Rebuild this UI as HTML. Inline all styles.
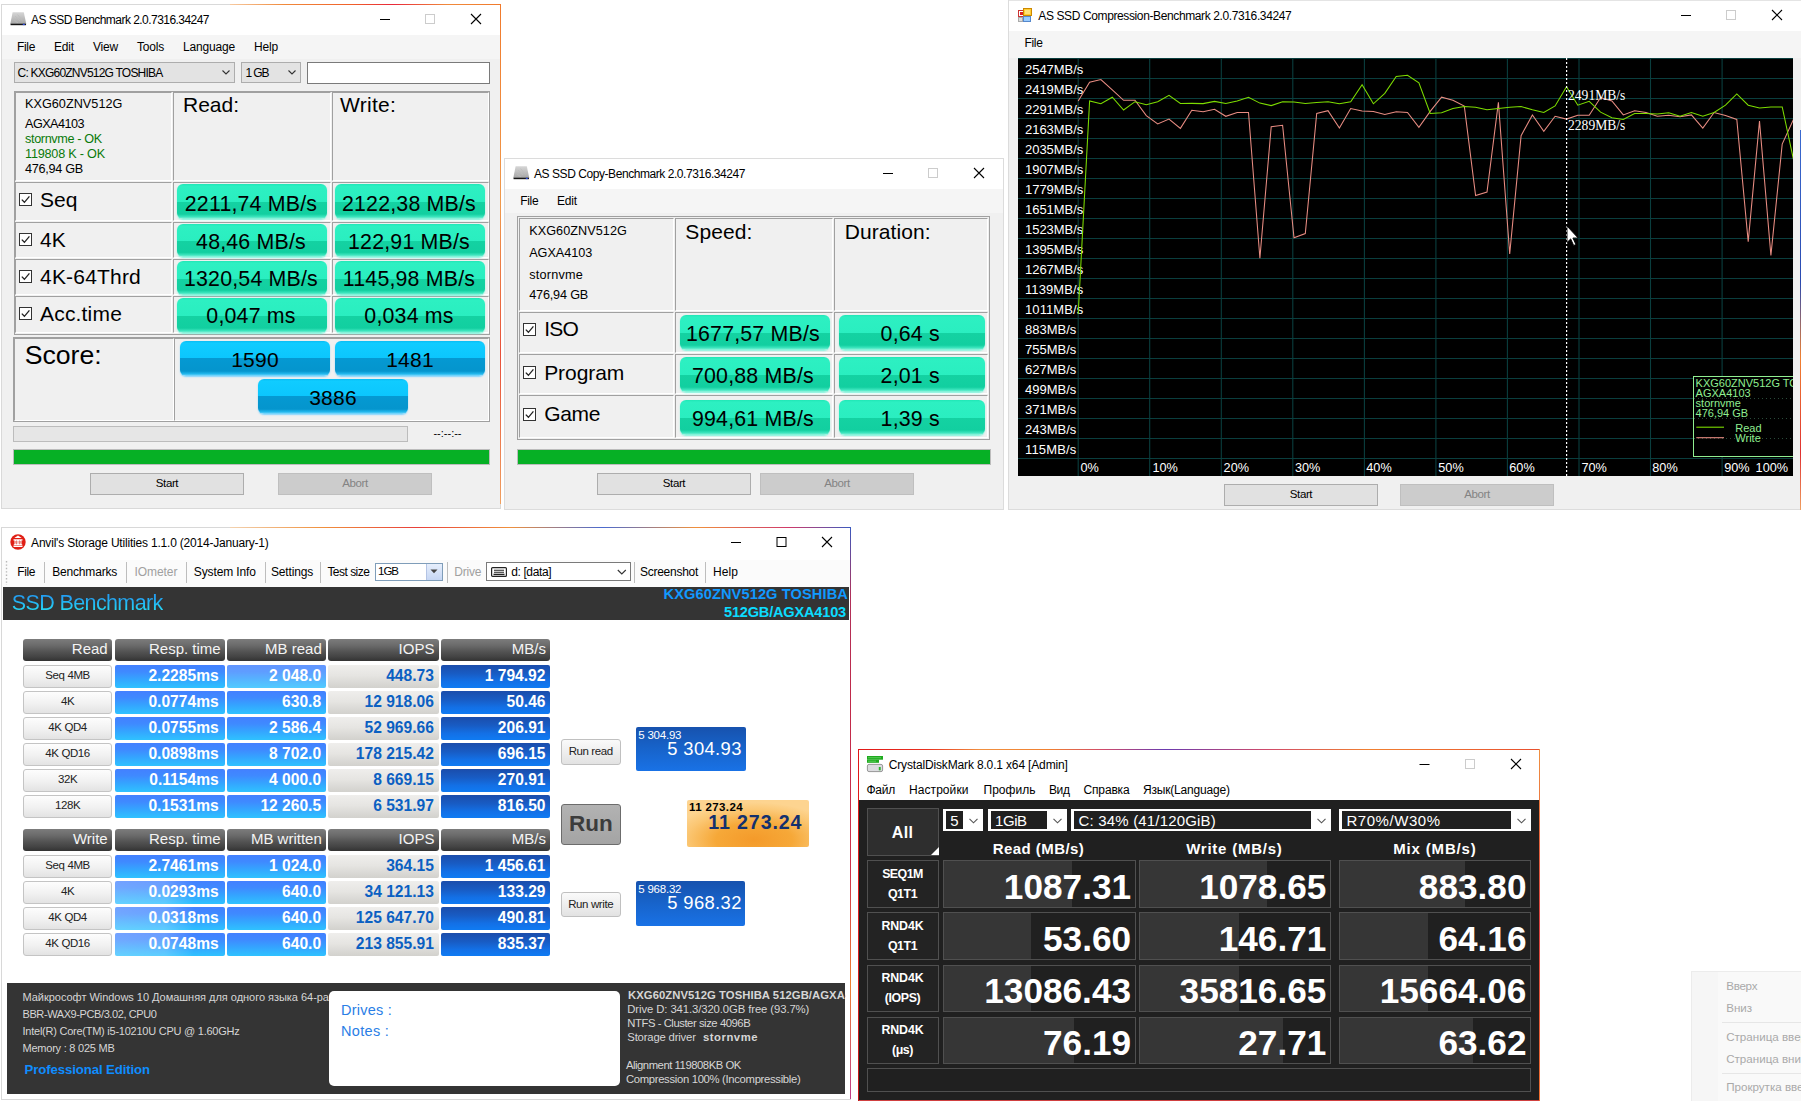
<!DOCTYPE html>
<html><head><meta charset="utf-8"><title>SSD benchmarks</title>
<style>
html,body{margin:0;padding:0;background:#fff;}
body{width:1801px;height:1101px;overflow:hidden;position:relative;font-family:"Liberation Sans",sans-serif;}
.a{position:absolute;display:block;}
.t{position:absolute;white-space:pre;display:block;}
</style></head><body>
<div class="a" style="left:1px;top:4px;width:500px;height:505px;background:#f0f0f0;box-sizing:border-box;border:1px solid #d9d9d9;"></div>
<div class="a" style="left:230px;top:4px;width:271px;height:1px;background:linear-gradient(to right,#f6c9a0,#f08a3c 20%,#f0602a 45%,#e8283a 60%,#f08a3c 80%,#f07a2c);"></div>
<div class="a" style="left:500px;top:4px;width:1px;height:500px;background:linear-gradient(to bottom,#f07a2c,#f09a4c 40%,#e8503a 70%,#f0a060);"></div>
<div class="a" style="left:2px;top:5px;width:498px;height:30px;background:#fff;"></div>
<svg class="a" style="left:9.8px;top:11.8px" width="17" height="14" viewBox="0 0 17 14"><defs><linearGradient id="ig9" x1="0" y1="0" x2="0" y2="1"><stop offset="0" stop-color="#d6d6d6"/><stop offset="1" stop-color="#a4a4a4"/></linearGradient></defs><path d="M2.6 0.3h11.2l2.4 11.2v1H0.4v-1z" fill="url(#ig9)"/><path d="M5 4l5 5M7.5 2.5l5 6M4 8l4 3" stroke="#bcbcbc" stroke-width=".8" fill="none"/><path d="M0.6 11.7h15.4v1.5H0.6z" fill="#161616"/><rect x="12.8" y="11.8" width="2" height="1.3" fill="#2a4ae0"/></svg>
<span class="t" style='left:31.00px;top:13.84px;font:400 12px/1 "Liberation Sans", sans-serif;color:#000;letter-spacing:-0.542px;'>AS SSD Benchmark 2.0.7316.34247</span>
<svg class="a" style="left:0;top:0" width="1801" height="1101" viewBox="0 0 1801 1101" fill="none"><path d="M380 19.5h10" stroke="#000" stroke-width="1"/><rect x="425.5" y="14.5" width="9" height="9" stroke="#ccc" stroke-width="1"/><path d="M471 14l10 10M481 14l-10 10" stroke="#000" stroke-width="1.1"/></svg>
<div class="a" style="left:2px;top:35px;width:498px;height:24px;background:#f5f5f5;"></div>
<span class="t" style='left:17.00px;top:40.84px;font:400 12px/1 "Liberation Sans", sans-serif;color:#000;letter-spacing:-0.334px;'>File</span>
<span class="t" style='left:54.00px;top:40.84px;font:400 12px/1 "Liberation Sans", sans-serif;color:#000;letter-spacing:-0.169px;'>Edit</span>
<span class="t" style='left:93.00px;top:40.84px;font:400 12px/1 "Liberation Sans", sans-serif;color:#000;letter-spacing:-0.198px;'>View</span>
<span class="t" style='left:137.00px;top:40.84px;font:400 12px/1 "Liberation Sans", sans-serif;color:#000;letter-spacing:-0.203px;'>Tools</span>
<span class="t" style='left:183.00px;top:40.84px;font:400 12px/1 "Liberation Sans", sans-serif;color:#000;letter-spacing:-0.174px;'>Language</span>
<span class="t" style='left:254.00px;top:40.84px;font:400 12px/1 "Liberation Sans", sans-serif;color:#000;letter-spacing:-0.170px;'>Help</span>
<div class="a" style="left:14px;top:62px;width:221px;height:21px;background:#e3e3e3;border:1px solid #adadad;box-sizing:border-box;"></div>
<span class="t" style='left:17.50px;top:66.84px;font:400 12px/1 "Liberation Sans", sans-serif;color:#000;letter-spacing:-0.781px;'>C: KXG60ZNV512G TOSHIBA</span>
<div class="a" style="left:241px;top:62px;width:60px;height:21px;background:#e3e3e3;border:1px solid #adadad;box-sizing:border-box;"></div>
<span class="t" style='left:245.50px;top:66.84px;font:400 12px/1 "Liberation Sans", sans-serif;color:#000;letter-spacing:-1.086px;'>1 GB</span>
<svg class="a" style="left:0;top:0" width="520" height="100" fill="none" stroke="#333" stroke-width="1.1"><path d="M222.5 70.5l3.5 3.5l3.5-3.5M288.5 70.5l3.5 3.5l3.5-3.5"/></svg>
<div class="a" style="left:307px;top:62px;width:183px;height:22px;background:#fff;border:1px solid #7a7a7a;box-sizing:border-box;"></div>
<div class="a" style="left:14px;top:91px;width:476px;height:244px;box-sizing:border-box;border:1px solid #a0a0a0;"></div>
<div class="a" style="left:15px;top:92px;width:157px;height:89px;box-sizing:border-box;border:1px solid #a0a0a0;border-right-color:#fff;border-bottom-color:#fff;background:#f0f0f0;"></div>
<div class="a" style="left:173px;top:92px;width:158px;height:89px;box-sizing:border-box;border:1px solid #a0a0a0;border-right-color:#fff;border-bottom-color:#fff;background:#f0f0f0;"></div>
<div class="a" style="left:332px;top:92px;width:157px;height:89px;box-sizing:border-box;border:1px solid #a0a0a0;border-right-color:#fff;border-bottom-color:#fff;background:#f0f0f0;"></div>
<div class="a" style="left:15px;top:182px;width:157px;height:39px;box-sizing:border-box;border:1px solid #a0a0a0;border-right-color:#fff;border-bottom-color:#fff;background:#f0f0f0;"></div>
<div class="a" style="left:173px;top:182px;width:158px;height:39px;box-sizing:border-box;border:1px solid #a0a0a0;border-right-color:#fff;border-bottom-color:#fff;background:#f0f0f0;"></div>
<div class="a" style="left:332px;top:182px;width:157px;height:39px;box-sizing:border-box;border:1px solid #a0a0a0;border-right-color:#fff;border-bottom-color:#fff;background:#f0f0f0;"></div>
<div class="a" style="left:15px;top:222px;width:157px;height:36px;box-sizing:border-box;border:1px solid #a0a0a0;border-right-color:#fff;border-bottom-color:#fff;background:#f0f0f0;"></div>
<div class="a" style="left:173px;top:222px;width:158px;height:36px;box-sizing:border-box;border:1px solid #a0a0a0;border-right-color:#fff;border-bottom-color:#fff;background:#f0f0f0;"></div>
<div class="a" style="left:332px;top:222px;width:157px;height:36px;box-sizing:border-box;border:1px solid #a0a0a0;border-right-color:#fff;border-bottom-color:#fff;background:#f0f0f0;"></div>
<div class="a" style="left:15px;top:259px;width:157px;height:36px;box-sizing:border-box;border:1px solid #a0a0a0;border-right-color:#fff;border-bottom-color:#fff;background:#f0f0f0;"></div>
<div class="a" style="left:173px;top:259px;width:158px;height:36px;box-sizing:border-box;border:1px solid #a0a0a0;border-right-color:#fff;border-bottom-color:#fff;background:#f0f0f0;"></div>
<div class="a" style="left:332px;top:259px;width:157px;height:36px;box-sizing:border-box;border:1px solid #a0a0a0;border-right-color:#fff;border-bottom-color:#fff;background:#f0f0f0;"></div>
<div class="a" style="left:15px;top:296px;width:157px;height:37px;box-sizing:border-box;border:1px solid #a0a0a0;border-right-color:#fff;border-bottom-color:#fff;background:#f0f0f0;"></div>
<div class="a" style="left:173px;top:296px;width:158px;height:37px;box-sizing:border-box;border:1px solid #a0a0a0;border-right-color:#fff;border-bottom-color:#fff;background:#f0f0f0;"></div>
<div class="a" style="left:332px;top:296px;width:157px;height:37px;box-sizing:border-box;border:1px solid #a0a0a0;border-right-color:#fff;border-bottom-color:#fff;background:#f0f0f0;"></div>
<span class="t" style='left:25.00px;top:98.27px;font:400 12.67px/1 "Liberation Sans", sans-serif;color:#000;letter-spacing:0.026px;'>KXG60ZNV512G</span>
<span class="t" style='left:25.00px;top:118.27px;font:400 12.67px/1 "Liberation Sans", sans-serif;color:#000;letter-spacing:-0.549px;'>AGXA4103</span>
<span class="t" style='left:25.00px;top:133.27px;font:400 12.67px/1 "Liberation Sans", sans-serif;color:#0a7a0a;letter-spacing:-0.359px;'>stornvme - OK</span>
<span class="t" style='left:25.00px;top:147.77px;font:400 12.67px/1 "Liberation Sans", sans-serif;color:#0a7a0a;letter-spacing:-0.221px;'>119808 K - OK</span>
<span class="t" style='left:25.00px;top:163.27px;font:400 12.67px/1 "Liberation Sans", sans-serif;color:#000;letter-spacing:-0.287px;'>476,94 GB</span>
<span class="t" style='left:183.00px;top:94.22px;font:400 21px/1 "Liberation Sans", sans-serif;color:#000;letter-spacing:-0.008px;'>Read:</span>
<span class="t" style='left:340.00px;top:94.22px;font:400 21px/1 "Liberation Sans", sans-serif;color:#000;letter-spacing:0.259px;'>Write:</span>
<svg class="a" style="left:19px;top:193px" width="13" height="13" viewBox="0 0 13 13"><rect x="0.5" y="0.5" width="12" height="12" fill="#fff" stroke="#333"/><path d="M2.8 6.6l2.6 2.7l5-6" fill="none" stroke="#222" stroke-width="1.3"/></svg>
<span class="t" style='left:40.00px;top:188.92px;font:400 21px/1 "Liberation Sans", sans-serif;color:#000;letter-spacing:0.045px;'>Seq</span>
<svg class="a" style="left:19px;top:233px" width="13" height="13" viewBox="0 0 13 13"><rect x="0.5" y="0.5" width="12" height="12" fill="#fff" stroke="#333"/><path d="M2.8 6.6l2.6 2.7l5-6" fill="none" stroke="#222" stroke-width="1.3"/></svg>
<span class="t" style='left:40.00px;top:228.72px;font:400 21px/1 "Liberation Sans", sans-serif;color:#000;letter-spacing:0.157px;'>4K</span>
<svg class="a" style="left:19px;top:270px" width="13" height="13" viewBox="0 0 13 13"><rect x="0.5" y="0.5" width="12" height="12" fill="#fff" stroke="#333"/><path d="M2.8 6.6l2.6 2.7l5-6" fill="none" stroke="#222" stroke-width="1.3"/></svg>
<span class="t" style='left:40.00px;top:265.72px;font:400 21px/1 "Liberation Sans", sans-serif;color:#000;letter-spacing:0.198px;'>4K-64Thrd</span>
<svg class="a" style="left:19px;top:307px" width="13" height="13" viewBox="0 0 13 13"><rect x="0.5" y="0.5" width="12" height="12" fill="#fff" stroke="#333"/><path d="M2.8 6.6l2.6 2.7l5-6" fill="none" stroke="#222" stroke-width="1.3"/></svg>
<span class="t" style='left:40.00px;top:302.72px;font:400 21px/1 "Liberation Sans", sans-serif;color:#000;letter-spacing:0.186px;'>Acc.time</span>
<div class="a" style="left:177px;top:183.5px;width:150px;height:35px;border-radius:6px;background:linear-gradient(to bottom,#20e6b6 0,#2df0c2 6%,#2aeec0 52%,#14d2a2 52%,#12cfa0 86%,#3ee6bf 94%,#9af5e0 100%);box-shadow:0 1px 1.5px rgba(120,245,220,.9);"></div>
<span class="t" style='left:184.81px;top:194.18px;font:400 21.33px/1 "Liberation Sans", sans-serif;color:#000;letter-spacing:0.195px;'>2211,74 MB/s</span>
<div class="a" style="left:335px;top:183.5px;width:150px;height:35px;border-radius:6px;background:linear-gradient(to bottom,#20e6b6 0,#2df0c2 6%,#2aeec0 52%,#14d2a2 52%,#12cfa0 86%,#3ee6bf 94%,#9af5e0 100%);box-shadow:0 1px 1.5px rgba(120,245,220,.9);"></div>
<span class="t" style='left:342.01px;top:194.18px;font:400 21.33px/1 "Liberation Sans", sans-serif;color:#000;letter-spacing:0.197px;'>2122,38 MB/s</span>
<div class="a" style="left:177px;top:223.5px;width:150px;height:33.5px;border-radius:6px;background:linear-gradient(to bottom,#20e6b6 0,#2df0c2 6%,#2aeec0 52%,#14d2a2 52%,#12cfa0 86%,#3ee6bf 94%,#9af5e0 100%);box-shadow:0 1px 1.5px rgba(120,245,220,.9);"></div>
<span class="t" style='left:196.08px;top:231.73px;font:400 21.33px/1 "Liberation Sans", sans-serif;color:#000;letter-spacing:0.194px;'>48,46 MB/s</span>
<div class="a" style="left:335px;top:223.5px;width:150px;height:33.5px;border-radius:6px;background:linear-gradient(to bottom,#20e6b6 0,#2df0c2 6%,#2aeec0 52%,#14d2a2 52%,#12cfa0 86%,#3ee6bf 94%,#9af5e0 100%);box-shadow:0 1px 1.5px rgba(120,245,220,.9);"></div>
<span class="t" style='left:348.05px;top:231.73px;font:400 21.33px/1 "Liberation Sans", sans-serif;color:#000;letter-spacing:0.196px;'>122,91 MB/s</span>
<div class="a" style="left:177px;top:260.5px;width:150px;height:34px;border-radius:6px;background:linear-gradient(to bottom,#20e6b6 0,#2df0c2 6%,#2aeec0 52%,#14d2a2 52%,#12cfa0 86%,#3ee6bf 94%,#9af5e0 100%);box-shadow:0 1px 1.5px rgba(120,245,220,.9);"></div>
<span class="t" style='left:184.01px;top:268.98px;font:400 21.33px/1 "Liberation Sans", sans-serif;color:#000;letter-spacing:0.197px;'>1320,54 MB/s</span>
<div class="a" style="left:335px;top:260.5px;width:150px;height:34px;border-radius:6px;background:linear-gradient(to bottom,#20e6b6 0,#2df0c2 6%,#2aeec0 52%,#14d2a2 52%,#12cfa0 86%,#3ee6bf 94%,#9af5e0 100%);box-shadow:0 1px 1.5px rgba(120,245,220,.9);"></div>
<span class="t" style='left:342.81px;top:268.98px;font:400 21.33px/1 "Liberation Sans", sans-serif;color:#000;letter-spacing:0.195px;'>1145,98 MB/s</span>
<div class="a" style="left:177px;top:297.5px;width:150px;height:35px;border-radius:6px;background:linear-gradient(to bottom,#20e6b6 0,#2df0c2 6%,#2aeec0 52%,#14d2a2 52%,#12cfa0 86%,#3ee6bf 94%,#9af5e0 100%);box-shadow:0 1px 1.5px rgba(120,245,220,.9);"></div>
<span class="t" style='left:206.34px;top:306.48px;font:400 21.33px/1 "Liberation Sans", sans-serif;color:#000;letter-spacing:0.197px;'>0,047 ms</span>
<div class="a" style="left:335px;top:297.5px;width:150px;height:35px;border-radius:6px;background:linear-gradient(to bottom,#20e6b6 0,#2df0c2 6%,#2aeec0 52%,#14d2a2 52%,#12cfa0 86%,#3ee6bf 94%,#9af5e0 100%);box-shadow:0 1px 1.5px rgba(120,245,220,.9);"></div>
<span class="t" style='left:364.34px;top:306.48px;font:400 21.33px/1 "Liberation Sans", sans-serif;color:#000;letter-spacing:0.197px;'>0,034 ms</span>
<div class="a" style="left:13px;top:337px;width:477px;height:85px;box-sizing:border-box;border:1px solid #a0a0a0;"></div>
<div class="a" style="left:14px;top:338px;width:160px;height:83px;box-sizing:border-box;border:1px solid #a0a0a0;border-right-color:#fff;border-bottom-color:#fff;background:#f0f0f0;"></div>
<div class="a" style="left:174px;top:338px;width:315px;height:83px;box-sizing:border-box;border:1px solid #a0a0a0;border-right-color:#fff;border-bottom-color:#fff;background:#f0f0f0;"></div>
<span class="t" style='left:24.70px;top:341.72px;font:400 26.67px/1 "Liberation Sans", sans-serif;color:#000;letter-spacing:-0.013px;'>Score:</span>
<div class="a" style="left:180.3px;top:341.2px;width:149.4px;height:35px;border-radius:6px;background:linear-gradient(to bottom,#08bcf4 0,#10ccff 6%,#0cc6fd 50%,#0599d2 50%,#0595cd 86%,#22b8ee 94%,#8adcff 100%);box-shadow:0 1px 1.5px rgba(120,210,255,.9);"></div>
<span class="t" style='left:231.22px;top:349.24px;font:400 21px/1 "Liberation Sans", sans-serif;color:#000;letter-spacing:0.210px;'>1590</span>
<div class="a" style="left:335px;top:341.2px;width:150px;height:35px;border-radius:6px;background:linear-gradient(to bottom,#08bcf4 0,#10ccff 6%,#0cc6fd 50%,#0599d2 50%,#0595cd 86%,#22b8ee 94%,#8adcff 100%);box-shadow:0 1px 1.5px rgba(120,210,255,.9);"></div>
<span class="t" style='left:386.22px;top:349.24px;font:400 21px/1 "Liberation Sans", sans-serif;color:#000;letter-spacing:0.210px;'>1481</span>
<div class="a" style="left:258px;top:379px;width:150px;height:35px;border-radius:6px;background:linear-gradient(to bottom,#08bcf4 0,#10ccff 6%,#0cc6fd 50%,#0599d2 50%,#0595cd 86%,#22b8ee 94%,#8adcff 100%);box-shadow:0 1px 1.5px rgba(120,210,255,.9);"></div>
<span class="t" style='left:309.22px;top:387.04px;font:400 21px/1 "Liberation Sans", sans-serif;color:#000;letter-spacing:0.210px;'>3886</span>
<div class="a" style="left:13px;top:426px;width:395px;height:15.5px;background:#e6e6e6;border:1px solid #bcbcbc;box-sizing:border-box;"></div>
<span class="t" style='left:433.45px;top:428.19px;font:400 11px/1 "Liberation Sans", sans-serif;color:#000;'>--:--:--</span>
<div class="a" style="left:13px;top:448.5px;width:477px;height:16px;background:#06b025;border:1px solid #bcbcbc;box-sizing:border-box;"></div>
<div class="a" style="left:90px;top:472.5px;width:154px;height:22.5px;background:#e1e1e1;border:1px solid #adadad;box-sizing:border-box;"></div>
<span class="t" style='left:155.83px;top:478.32px;font:400 11.5px/1 "Liberation Sans", sans-serif;color:#000;letter-spacing:-0.389px;'>Start</span>
<div class="a" style="left:278px;top:472.5px;width:154px;height:22.5px;background:#cccccc;border:1px solid #bfbfbf;box-sizing:border-box;"></div>
<span class="t" style='left:342.36px;top:478.32px;font:400 11.5px/1 "Liberation Sans", sans-serif;color:#838383;letter-spacing:-0.440px;'>Abort</span>
<div class="a" style="left:504px;top:158px;width:500px;height:352px;background:#f0f0f0;box-sizing:border-box;border:1px solid #dcdcdc;"></div>
<div class="a" style="left:505px;top:159px;width:498px;height:30px;background:#fff;"></div>
<svg class="a" style="left:512.8px;top:165.5px" width="17" height="14" viewBox="0 0 17 14"><defs><linearGradient id="ig512" x1="0" y1="0" x2="0" y2="1"><stop offset="0" stop-color="#d6d6d6"/><stop offset="1" stop-color="#a4a4a4"/></linearGradient></defs><path d="M2.6 0.3h11.2l2.4 11.2v1H0.4v-1z" fill="url(#ig512)"/><path d="M5 4l5 5M7.5 2.5l5 6M4 8l4 3" stroke="#bcbcbc" stroke-width=".8" fill="none"/><path d="M0.6 11.7h15.4v1.5H0.6z" fill="#161616"/><rect x="12.8" y="11.8" width="2" height="1.3" fill="#2a4ae0"/></svg>
<span class="t" style='left:534.00px;top:167.54px;font:400 12px/1 "Liberation Sans", sans-serif;color:#000;letter-spacing:-0.439px;'>AS SSD Copy-Benchmark 2.0.7316.34247</span>
<svg class="a" style="left:0;top:0" width="1801" height="1101" viewBox="0 0 1801 1101" fill="none"><path d="M883 173.5h10" stroke="#000" stroke-width="1"/><rect x="928.5" y="168.5" width="9" height="9" stroke="#ccc" stroke-width="1"/><path d="M974 168l10 10M984 168l-10 10" stroke="#000" stroke-width="1.1"/></svg>
<div class="a" style="left:505px;top:189px;width:498px;height:24px;background:#f5f5f5;"></div>
<span class="t" style='left:520.30px;top:194.84px;font:400 12px/1 "Liberation Sans", sans-serif;color:#000;letter-spacing:-0.334px;'>File</span>
<span class="t" style='left:557.00px;top:194.84px;font:400 12px/1 "Liberation Sans", sans-serif;color:#000;letter-spacing:-0.169px;'>Edit</span>
<div class="a" style="left:517px;top:216px;width:473px;height:224px;box-sizing:border-box;border:1px solid #a0a0a0;"></div>
<div class="a" style="left:519px;top:218px;width:155px;height:93px;box-sizing:border-box;border:1px solid #a0a0a0;border-right-color:#fff;border-bottom-color:#fff;background:#f0f0f0;"></div>
<div class="a" style="left:675px;top:218px;width:158px;height:93px;box-sizing:border-box;border:1px solid #a0a0a0;border-right-color:#fff;border-bottom-color:#fff;background:#f0f0f0;"></div>
<div class="a" style="left:834px;top:218px;width:154px;height:93px;box-sizing:border-box;border:1px solid #a0a0a0;border-right-color:#fff;border-bottom-color:#fff;background:#f0f0f0;"></div>
<div class="a" style="left:519px;top:312px;width:155px;height:41px;box-sizing:border-box;border:1px solid #a0a0a0;border-right-color:#fff;border-bottom-color:#fff;background:#f0f0f0;"></div>
<div class="a" style="left:675px;top:312px;width:158px;height:41px;box-sizing:border-box;border:1px solid #a0a0a0;border-right-color:#fff;border-bottom-color:#fff;background:#f0f0f0;"></div>
<div class="a" style="left:834px;top:312px;width:154px;height:41px;box-sizing:border-box;border:1px solid #a0a0a0;border-right-color:#fff;border-bottom-color:#fff;background:#f0f0f0;"></div>
<div class="a" style="left:519px;top:354px;width:155px;height:40px;box-sizing:border-box;border:1px solid #a0a0a0;border-right-color:#fff;border-bottom-color:#fff;background:#f0f0f0;"></div>
<div class="a" style="left:675px;top:354px;width:158px;height:40px;box-sizing:border-box;border:1px solid #a0a0a0;border-right-color:#fff;border-bottom-color:#fff;background:#f0f0f0;"></div>
<div class="a" style="left:834px;top:354px;width:154px;height:40px;box-sizing:border-box;border:1px solid #a0a0a0;border-right-color:#fff;border-bottom-color:#fff;background:#f0f0f0;"></div>
<div class="a" style="left:519px;top:395px;width:155px;height:43px;box-sizing:border-box;border:1px solid #a0a0a0;border-right-color:#fff;border-bottom-color:#fff;background:#f0f0f0;"></div>
<div class="a" style="left:675px;top:395px;width:158px;height:43px;box-sizing:border-box;border:1px solid #a0a0a0;border-right-color:#fff;border-bottom-color:#fff;background:#f0f0f0;"></div>
<div class="a" style="left:834px;top:395px;width:154px;height:43px;box-sizing:border-box;border:1px solid #a0a0a0;border-right-color:#fff;border-bottom-color:#fff;background:#f0f0f0;"></div>
<span class="t" style='left:529.20px;top:224.77px;font:400 12.67px/1 "Liberation Sans", sans-serif;color:#000;letter-spacing:0.051px;'>KXG60ZNV512G</span>
<span class="t" style='left:529.20px;top:246.77px;font:400 12.67px/1 "Liberation Sans", sans-serif;color:#000;letter-spacing:-0.049px;'>AGXA4103</span>
<span class="t" style='left:529.20px;top:268.77px;font:400 12.67px/1 "Liberation Sans", sans-serif;color:#000;letter-spacing:0.237px;'>stornvme</span>
<span class="t" style='left:529.20px;top:288.57px;font:400 12.67px/1 "Liberation Sans", sans-serif;color:#000;letter-spacing:-0.175px;'>476,94 GB</span>
<span class="t" style='left:685.30px;top:220.52px;font:400 21px/1 "Liberation Sans", sans-serif;color:#000;letter-spacing:0.074px;'>Speed:</span>
<span class="t" style='left:844.70px;top:220.52px;font:400 21px/1 "Liberation Sans", sans-serif;color:#000;letter-spacing:0.088px;'>Duration:</span>
<svg class="a" style="left:523px;top:323.3px" width="13" height="13" viewBox="0 0 13 13"><rect x="0.5" y="0.5" width="12" height="12" fill="#fff" stroke="#333"/><path d="M2.8 6.6l2.6 2.7l5-6" fill="none" stroke="#222" stroke-width="1.3"/></svg>
<span class="t" style='left:544.20px;top:318.42px;font:400 21px/1 "Liberation Sans", sans-serif;color:#000;letter-spacing:-0.725px;'>ISO</span>
<svg class="a" style="left:523px;top:366.3px" width="13" height="13" viewBox="0 0 13 13"><rect x="0.5" y="0.5" width="12" height="12" fill="#fff" stroke="#333"/><path d="M2.8 6.6l2.6 2.7l5-6" fill="none" stroke="#222" stroke-width="1.3"/></svg>
<span class="t" style='left:544.20px;top:361.82px;font:400 21px/1 "Liberation Sans", sans-serif;color:#000;letter-spacing:-0.075px;'>Program</span>
<svg class="a" style="left:523px;top:407.5px" width="13" height="13" viewBox="0 0 13 13"><rect x="0.5" y="0.5" width="12" height="12" fill="#fff" stroke="#333"/><path d="M2.8 6.6l2.6 2.7l5-6" fill="none" stroke="#222" stroke-width="1.3"/></svg>
<span class="t" style='left:544.20px;top:402.52px;font:400 21px/1 "Liberation Sans", sans-serif;color:#000;letter-spacing:-0.297px;'>Game</span>
<div class="a" style="left:680px;top:315px;width:149.5px;height:35px;border-radius:6px;background:linear-gradient(to bottom,#20e6b6 0,#2df0c2 6%,#2aeec0 52%,#14d2a2 52%,#12cfa0 86%,#3ee6bf 94%,#9af5e0 100%);box-shadow:0 1px 1.5px rgba(120,245,220,.9);"></div>
<span class="t" style='left:685.96px;top:323.68px;font:400 21.33px/1 "Liberation Sans", sans-serif;color:#000;letter-spacing:0.197px;'>1677,57 MB/s</span>
<div class="a" style="left:838.8px;top:315px;width:146.4px;height:35px;border-radius:6px;background:linear-gradient(to bottom,#20e6b6 0,#2df0c2 6%,#2aeec0 52%,#14d2a2 52%,#12cfa0 86%,#3ee6bf 94%,#9af5e0 100%);box-shadow:0 1px 1.5px rgba(120,245,220,.9);"></div>
<span class="t" style='left:880.62px;top:323.68px;font:400 21.33px/1 "Liberation Sans", sans-serif;color:#000;letter-spacing:0.174px;'>0,64 s</span>
<div class="a" style="left:680px;top:357px;width:149.5px;height:35px;border-radius:6px;background:linear-gradient(to bottom,#20e6b6 0,#2df0c2 6%,#2aeec0 52%,#14d2a2 52%,#12cfa0 86%,#3ee6bf 94%,#9af5e0 100%);box-shadow:0 1px 1.5px rgba(120,245,220,.9);"></div>
<span class="t" style='left:692.00px;top:365.68px;font:400 21.33px/1 "Liberation Sans", sans-serif;color:#000;letter-spacing:0.196px;'>700,88 MB/s</span>
<div class="a" style="left:838.8px;top:357px;width:146.4px;height:35px;border-radius:6px;background:linear-gradient(to bottom,#20e6b6 0,#2df0c2 6%,#2aeec0 52%,#14d2a2 52%,#12cfa0 86%,#3ee6bf 94%,#9af5e0 100%);box-shadow:0 1px 1.5px rgba(120,245,220,.9);"></div>
<span class="t" style='left:880.62px;top:365.68px;font:400 21.33px/1 "Liberation Sans", sans-serif;color:#000;letter-spacing:0.174px;'>2,01 s</span>
<div class="a" style="left:680px;top:400px;width:149.5px;height:35px;border-radius:6px;background:linear-gradient(to bottom,#20e6b6 0,#2df0c2 6%,#2aeec0 52%,#14d2a2 52%,#12cfa0 86%,#3ee6bf 94%,#9af5e0 100%);box-shadow:0 1px 1.5px rgba(120,245,220,.9);"></div>
<span class="t" style='left:692.00px;top:408.68px;font:400 21.33px/1 "Liberation Sans", sans-serif;color:#000;letter-spacing:0.196px;'>994,61 MB/s</span>
<div class="a" style="left:838.8px;top:400px;width:146.4px;height:35px;border-radius:6px;background:linear-gradient(to bottom,#20e6b6 0,#2df0c2 6%,#2aeec0 52%,#14d2a2 52%,#12cfa0 86%,#3ee6bf 94%,#9af5e0 100%);box-shadow:0 1px 1.5px rgba(120,245,220,.9);"></div>
<span class="t" style='left:880.62px;top:408.68px;font:400 21.33px/1 "Liberation Sans", sans-serif;color:#000;letter-spacing:0.174px;'>1,39 s</span>
<div class="a" style="left:517px;top:448.5px;width:474px;height:16px;background:#06b025;border:1px solid #bcbcbc;box-sizing:border-box;"></div>
<div class="a" style="left:597px;top:472.5px;width:154px;height:22.5px;background:#e1e1e1;border:1px solid #adadad;box-sizing:border-box;"></div>
<span class="t" style='left:662.83px;top:478.32px;font:400 11.5px/1 "Liberation Sans", sans-serif;color:#000;letter-spacing:-0.389px;'>Start</span>
<div class="a" style="left:760px;top:472.5px;width:154px;height:22.5px;background:#cccccc;border:1px solid #bfbfbf;box-sizing:border-box;"></div>
<span class="t" style='left:824.36px;top:478.32px;font:400 11.5px/1 "Liberation Sans", sans-serif;color:#838383;letter-spacing:-0.440px;'>Abort</span>
<div class="a" style="left:1008px;top:0px;width:793px;height:510px;background:#f0f0f0;box-sizing:border-box;border-left:1px solid #dcdcdc;border-bottom:1px solid #dcdcdc;"></div>
<div class="a" style="left:1009px;top:1px;width:792px;height:30px;background:#fff;"></div>
<div class="a" style="left:1009px;top:0px;width:792px;height:1px;background:#e4e4e4;"></div>
<svg class="a" style="left:1018px;top:8px" width="14" height="14" viewBox="0 0 14 14"><rect x="0.5" y="2.5" width="6" height="6" fill="#fff" stroke="#c33"/><rect x="2" y="4" width="3" height="3" fill="#d22"/><rect x="5.5" y="0.5" width="8" height="7" fill="#fc3" stroke="#c80"/><rect x="7" y="2" width="5" height="4" fill="#ffe27a"/><rect x="5.5" y="8.5" width="7" height="5" fill="#9cf" stroke="#58c"/><rect x="0.5" y="9.5" width="4" height="4" fill="#ddd" stroke="#aaa"/></svg>
<span class="t" style='left:1038.30px;top:9.64px;font:400 12px/1 "Liberation Sans", sans-serif;color:#000;letter-spacing:-0.383px;'>AS SSD Compression-Benchmark 2.0.7316.34247</span>
<svg class="a" style="left:0;top:0" width="1801" height="1101" viewBox="0 0 1801 1101" fill="none"><path d="M1681 15.5h10" stroke="#000" stroke-width="1"/><rect x="1726.5" y="10.5" width="9" height="9" stroke="#ccc" stroke-width="1"/><path d="M1772 10l10 10M1782 10l-10 10" stroke="#000" stroke-width="1.1"/></svg>
<div class="a" style="left:1009px;top:31px;width:792px;height:27px;background:#f5f5f5;"></div>
<span class="t" style='left:1024.50px;top:36.64px;font:400 12px/1 "Liberation Sans", sans-serif;color:#000;letter-spacing:-0.334px;'>File</span>
<svg class="a" style="left:1018px;top:58px" width="775" height="418" viewBox="1018 58 775 418"><rect x="1018" y="58" width="775" height="418" fill="#000"/><path d="M1018 58.5H1793M1018 78.5H1793M1018 98.5H1793M1018 118.5H1793M1018 138.5H1793M1018 158.5H1793M1018 178.5H1793M1018 198.5H1793M1018 218.5H1793M1018 238.5H1793M1018 258.5H1793M1018 278.5H1793M1018 298.5H1793M1018 318.5H1793M1018 338.5H1793M1018 358.5H1793M1018 378.5H1793M1018 398.5H1793M1018 418.5H1793M1018 438.5H1793M1018 458.5H1793M1078.2 58V476M1149.7 58V476M1221.3 58V476M1292.8 58V476M1364.4 58V476M1435.9 58V476M1507.4 58V476M1579.0 58V476M1650.5 58V476M1722.1 58V476M1793.6 58V476" stroke="#0a3e3e" stroke-width="1.1" fill="none"/><text x="1025" y="73.8" font-size="13" fill="#fff" textLength="58.3" lengthAdjust="spacing">2547MB/s</text><text x="1025" y="93.8" font-size="13" fill="#fff" textLength="58.3" lengthAdjust="spacing">2419MB/s</text><text x="1025" y="113.8" font-size="13" fill="#fff" textLength="58.3" lengthAdjust="spacing">2291MB/s</text><text x="1025" y="133.8" font-size="13" fill="#fff" textLength="58.3" lengthAdjust="spacing">2163MB/s</text><text x="1025" y="153.8" font-size="13" fill="#fff" textLength="58.3" lengthAdjust="spacing">2035MB/s</text><text x="1025" y="173.8" font-size="13" fill="#fff" textLength="58.3" lengthAdjust="spacing">1907MB/s</text><text x="1025" y="193.8" font-size="13" fill="#fff" textLength="58.3" lengthAdjust="spacing">1779MB/s</text><text x="1025" y="213.8" font-size="13" fill="#fff" textLength="58.3" lengthAdjust="spacing">1651MB/s</text><text x="1025" y="233.8" font-size="13" fill="#fff" textLength="58.3" lengthAdjust="spacing">1523MB/s</text><text x="1025" y="253.8" font-size="13" fill="#fff" textLength="58.3" lengthAdjust="spacing">1395MB/s</text><text x="1025" y="273.8" font-size="13" fill="#fff" textLength="58.3" lengthAdjust="spacing">1267MB/s</text><text x="1025" y="293.8" font-size="13" fill="#fff" textLength="58.3" lengthAdjust="spacing">1139MB/s</text><text x="1025" y="313.8" font-size="13" fill="#fff" textLength="58.3" lengthAdjust="spacing">1011MB/s</text><text x="1025" y="333.8" font-size="13" fill="#fff" textLength="51.3" lengthAdjust="spacing">883MB/s</text><text x="1025" y="353.8" font-size="13" fill="#fff" textLength="51.3" lengthAdjust="spacing">755MB/s</text><text x="1025" y="373.8" font-size="13" fill="#fff" textLength="51.3" lengthAdjust="spacing">627MB/s</text><text x="1025" y="393.8" font-size="13" fill="#fff" textLength="51.3" lengthAdjust="spacing">499MB/s</text><text x="1025" y="413.8" font-size="13" fill="#fff" textLength="51.3" lengthAdjust="spacing">371MB/s</text><text x="1025" y="433.8" font-size="13" fill="#fff" textLength="51.3" lengthAdjust="spacing">243MB/s</text><text x="1025" y="453.8" font-size="13" fill="#fff" textLength="51.3" lengthAdjust="spacing">115MB/s</text><text x="1080.4" y="472.2" font-size="12.7" fill="#fff">0%</text><text x="1152.5" y="472.2" font-size="12.7" fill="#fff">10%</text><text x="1223.6" y="472.2" font-size="12.7" fill="#fff">20%</text><text x="1295" y="472.2" font-size="12.7" fill="#fff">30%</text><text x="1366.3" y="472.2" font-size="12.7" fill="#fff">40%</text><text x="1438.3" y="472.2" font-size="12.7" fill="#fff">50%</text><text x="1509.3" y="472.2" font-size="12.7" fill="#fff">60%</text><text x="1581.5" y="472.2" font-size="12.7" fill="#fff">70%</text><text x="1652.3" y="472.2" font-size="12.7" fill="#fff">80%</text><text x="1724.2" y="472.2" font-size="12.7" fill="#fff">90%</text><text x="1755.6" y="472.2" font-size="12.7" fill="#fff">100%</text><polyline points="1078.2,101.0 1089.6,82.2 1100.9,79.5 1112.3,89.9 1123.6,100.3 1135.0,100.3 1146.3,115.6 1157.7,123.9 1169.0,119.1 1180.4,128.4 1191.8,110.3 1203.1,111.7 1214.5,109.3 1225.8,116.3 1237.2,112.5 1248.5,112.5 1259.9,258.1 1271.2,126.7 1282.6,125.3 1294.0,237.7 1305.3,233.5 1316.7,113.5 1328.0,110.7 1339.4,128.1 1350.7,108.6 1362.1,111.1 1373.4,111.4 1384.8,114.5 1396.2,111.7 1407.5,112.5 1418.9,127.4 1430.2,111.4 1441.6,97.2 1452.9,100.3 1464.3,106.1 1475.6,195.5 1487.0,192.0 1498.4,102.4 1509.7,253.9 1521.1,135.7 1532.4,114.9 1543.8,131.3 1555.1,116.3 1566.5,119.1 1577.8,115.2 1589.2,115.2 1600.6,97.5 1611.9,101.0 1623.3,114.9 1634.6,110.7 1646.0,112.5 1657.3,116.3 1668.7,115.3 1680.0,116.7 1691.4,114.9 1702.8,128.1 1714.1,112.5 1725.5,115.6 1736.8,119.5 1748.2,241.6 1759.5,121.1 1770.9,255.4 1782.2,144.1 1793.6,119.1" fill="none" stroke="#e88c82" stroke-width="1.05" stroke-linejoin="miter"/><polyline points="1078.2,314.0 1089.6,101.0 1100.9,103.8 1112.3,97.2 1123.6,110.0 1135.0,101.7 1146.3,104.7 1157.7,101.7 1169.0,95.4 1180.4,103.5 1191.8,103.4 1203.1,103.6 1214.5,101.4 1225.8,103.4 1237.2,101.0 1248.5,97.2 1259.9,103.1 1271.2,105.6 1282.6,101.7 1294.0,102.1 1305.3,103.4 1316.7,102.4 1328.0,101.7 1339.4,103.8 1350.7,101.7 1362.1,84.7 1373.4,103.8 1384.8,93.4 1396.2,76.4 1407.5,75.3 1418.9,82.9 1430.2,113.5 1441.6,112.8 1452.9,108.4 1464.3,106.6 1475.6,107.2 1487.0,109.7 1498.4,108.4 1509.7,107.2 1521.1,106.6 1532.4,109.7 1543.8,112.5 1555.1,105.9 1566.5,86.7 1577.8,105.2 1589.2,101.3 1600.6,112.1 1611.9,117.7 1623.3,119.5 1634.6,113.5 1646.0,113.5 1657.3,113.9 1668.7,112.8 1680.0,116.3 1691.4,112.5 1702.8,116.3 1714.1,112.5 1725.5,105.2 1736.8,94.0 1748.2,105.2 1759.5,107.9 1770.9,107.0 1782.2,107.0 1793.6,160.1" fill="none" stroke="#7ddc00" stroke-width="1.05" stroke-linejoin="miter"/><path d="M1566.6 58V476" stroke="#fff" stroke-width="1.2" stroke-dasharray="2 2" fill="none"/><text x="1568" y="99.6" font-size="13.6" fill="#fff" font-family="Liberation Serif, serif">2491MB/s</text><text x="1568" y="130.2" font-size="13.6" fill="#fff" font-family="Liberation Serif, serif">2289MB/s</text><rect x="1693.5" y="376.5" width="110" height="80" fill="#000" stroke="#90ee90" stroke-width="1"/><path d="M1694 398.5H1793M1694 418.5H1793M1694 438.5H1793" stroke="#2a4a3a" stroke-width="1" stroke-dasharray="1 3" fill="none"/><text x="1695.6" y="387" font-size="11" fill="#90ee90">KXG60ZNV512G TOSHIBA</text><text x="1695.6" y="396.8" font-size="11" fill="#90ee90">AGXA4103</text><text x="1695.6" y="407" font-size="11" fill="#90ee90">stornvme</text><text x="1695.6" y="416.9" font-size="11" fill="#90ee90">476,94 GB</text><path d="M1696.3 427.2H1724" stroke="#7ddc00" stroke-width="1.1"/><path d="M1696.3 437.7H1724" stroke="#e88c82" stroke-width="1.1"/><text x="1735.3" y="432" font-size="11" fill="#90ee90">Read</text><text x="1735.3" y="442" font-size="11" fill="#90ee90">Write</text><path d="M1567 226v16.5l3.7-3.6l3 6.6l2.2-1l-3-6.5h5.2z" fill="#fff" stroke="#000" stroke-width="0.9" stroke-linejoin="round"/></svg>
<div class="a" style="left:1224px;top:483.5px;width:154px;height:22.5px;background:#e1e1e1;border:1px solid #adadad;box-sizing:border-box;"></div>
<span class="t" style='left:1289.83px;top:489.32px;font:400 11.5px/1 "Liberation Sans", sans-serif;color:#000;letter-spacing:-0.389px;'>Start</span>
<div class="a" style="left:1400px;top:483.5px;width:154px;height:22.5px;background:#cccccc;border:1px solid #bfbfbf;box-sizing:border-box;"></div>
<span class="t" style='left:1464.36px;top:489.32px;font:400 11.5px/1 "Liberation Sans", sans-serif;color:#838383;letter-spacing:-0.440px;'>Abort</span>
<div class="a" style="left:1800px;top:130px;width:1px;height:380px;background:linear-gradient(to bottom,#3a6ad0,#2a4ab0 40%,#f08030 60%,#e03030 85%,#f0a060);"></div>
<div class="a" style="left:1px;top:527px;width:850px;height:572.5px;background:#fff;box-sizing:border-box;border:1px solid #d8d8d8;"></div>
<div class="a" style="left:230px;top:527px;width:621px;height:1px;background:linear-gradient(to right,#f2d2b0,#f0903c 15%,#e8403a 30%,#f0903c 45%,#4a6ad0 60%,#f0903c 75%,#d03a6a 90%,#3a5ac0);"></div>
<div class="a" style="left:850px;top:527px;width:1px;height:572px;background:linear-gradient(to bottom,#3a5ac0,#b0305a 12%,#c02a4a 30%,#d0304a 60%,#f08030 80%,#c03a8a);"></div>
<svg class="a" style="left:9.7px;top:533.8px" width="16" height="16" viewBox="0 0 16 16"><circle cx="8" cy="8" r="7.7" fill="#e01e14"/><path d="M8 1.4l3.7 2.6H4.3z" fill="#fff"/><path d="M3.5 5.2h9v1.2h-9zM4.5 6.4h1.9v3.8H4.5zM7.05 6.4h1.9v3.8H7.05zM9.6 6.4h1.9v3.8H9.6zM3.8 10.2h8.4v.9H3.8zM3.5 11.6h9v1.3h-9z" fill="#fff"/><path d="M5.45 7v2.6M8 7v2.6M10.55 7v2.6" stroke="#e0504a" stroke-width=".6"/></svg>
<span class="t" style='left:31.10px;top:537.04px;font:400 12px/1 "Liberation Sans", sans-serif;color:#000;letter-spacing:-0.199px;'>Anvil&#x27;s Storage Utilities 1.1.0 (2014-January-1)</span>
<svg class="a" style="left:0;top:0" width="1801" height="1101" viewBox="0 0 1801 1101" fill="none"><path d="M731 542.5h10" stroke="#000" stroke-width="1"/><rect x="777.0" y="537.5" width="9" height="9" stroke="#000" stroke-width="1"/><path d="M822 537l10 10M832 537l-10 10" stroke="#000" stroke-width="1.1"/></svg>
<div class="a" style="left:2px;top:560px;width:848px;height:27px;background:#fbfbfb;"></div>
<svg class="a" style="left:5px;top:561px" width="4" height="24"><path d="M1.5 0v24" stroke="#b8b8b8" stroke-width="1.4" stroke-dasharray="1.4 2"/></svg>
<span class="t" style='left:17.20px;top:566.04px;font:400 12px/1 "Liberation Sans", sans-serif;color:#000;letter-spacing:-0.334px;'>File</span>
<span class="t" style='left:52.20px;top:566.04px;font:400 12px/1 "Liberation Sans", sans-serif;color:#000;letter-spacing:-0.169px;'>Benchmarks</span>
<span class="t" style='left:134.40px;top:566.04px;font:400 12px/1 "Liberation Sans", sans-serif;color:#a0a0a0;letter-spacing:-0.049px;'>IOmeter</span>
<span class="t" style='left:193.80px;top:566.04px;font:400 12px/1 "Liberation Sans", sans-serif;color:#000;letter-spacing:-0.123px;'>System Info</span>
<span class="t" style='left:271.00px;top:566.04px;font:400 12px/1 "Liberation Sans", sans-serif;color:#000;letter-spacing:-0.170px;'>Settings</span>
<span class="t" style='left:327.40px;top:566.04px;font:400 12px/1 "Liberation Sans", sans-serif;color:#000;letter-spacing:-0.520px;'>Test size</span>
<span class="t" style='left:454.30px;top:566.04px;font:400 12px/1 "Liberation Sans", sans-serif;color:#a0a0a0;letter-spacing:-0.200px;'>Drive</span>
<span class="t" style='left:640.00px;top:566.04px;font:400 12px/1 "Liberation Sans", sans-serif;color:#000;letter-spacing:-0.270px;'>Screenshot</span>
<span class="t" style='left:713.00px;top:566.04px;font:400 12px/1 "Liberation Sans", sans-serif;color:#000;letter-spacing:0.080px;'>Help</span>
<div class="a" style="left:43.5px;top:562px;width:1px;height:21px;background:#bdbdbd;"></div>
<div class="a" style="left:125.5px;top:562px;width:1px;height:21px;background:#bdbdbd;"></div>
<div class="a" style="left:185.5px;top:562px;width:1px;height:21px;background:#bdbdbd;"></div>
<div class="a" style="left:264.5px;top:562px;width:1px;height:21px;background:#bdbdbd;"></div>
<div class="a" style="left:319.5px;top:562px;width:1px;height:21px;background:#bdbdbd;"></div>
<div class="a" style="left:446.5px;top:562px;width:1px;height:21px;background:#bdbdbd;"></div>
<div class="a" style="left:633.5px;top:562px;width:1px;height:21px;background:#bdbdbd;"></div>
<div class="a" style="left:704.5px;top:562px;width:1px;height:21px;background:#bdbdbd;"></div>
<div class="a" style="left:375px;top:562.5px;width:68px;height:18px;background:#fff;border:1px solid #7f9db9;box-sizing:border-box;"></div>
<span class="t" style='left:378.00px;top:565.77px;font:400 11.5px/1 "Liberation Sans", sans-serif;color:#000;letter-spacing:-1.004px;'>1GB</span>
<div class="a" style="left:426px;top:563.5px;width:16px;height:16px;background:linear-gradient(to bottom,#e6eefc,#c6d6f4);border-left:1px solid #b4c4e4;box-sizing:border-box;"></div>
<svg class="a" style="left:430px;top:569px" width="8" height="5"><path d="M0.5 0.5h7l-3.5 3.8z" fill="#444"/></svg>
<div class="a" style="left:486px;top:562px;width:145px;height:19px;background:#fff;border:1px solid #7a7a7a;box-sizing:border-box;"></div>
<svg class="a" style="left:490.5px;top:567px" width="16" height="10" viewBox="0 0 16 10"><rect x="0.6" y="0.6" width="14.8" height="8.8" rx="1" fill="#fff" stroke="#222" stroke-width="1.2"/><path d="M3 3.2h10M3 5.2h10" stroke="#222" stroke-width="1.1"/><path d="M2.5 7.4h11" stroke="#222" stroke-width="1.4"/></svg>
<span class="t" style='left:511.20px;top:566.04px;font:400 12px/1 "Liberation Sans", sans-serif;color:#000;letter-spacing:-0.374px;'>d: [data]</span>
<svg class="a" style="left:617px;top:569px" width="10" height="7" fill="none"><path d="M0.8 1l4 4l4-4" stroke="#333" stroke-width="1.1"/></svg>
<div class="a" style="left:3px;top:587px;width:845.5px;height:33px;background:#343434;"></div>
<span class="t" style='left:11.8px;top:593.2px;font:400 21.5px/1 "Liberation Sans",sans-serif;letter-spacing:-0.62px;background:linear-gradient(to bottom,#23a0f2 20%,#25d8f4 80%);-webkit-background-clip:text;background-clip:text;color:transparent;'>SSD Benchmark</span>
<span class="t" style='left:663.50px;top:587.44px;font:700 14.6px/1 "Liberation Sans", sans-serif;color:#1199ff;letter-spacing:0.111px;'>KXG60ZNV512G TOSHIBA</span>
<span class="t" style='left:724.00px;top:604.64px;font:700 14.6px/1 "Liberation Sans", sans-serif;color:#0cdcff;letter-spacing:-0.213px;'>512GB/AGXA4103</span>
<div class="a" style="left:23.0px;top:639.2px;width:89.2px;height:22px;border-radius:3px;background:linear-gradient(to bottom,#7c7c7c 0,#6a6a6a 30%,#555 55%,#444 80%,#333 100%);"></div>
<span class="t" style='left:71.84px;top:641.20px;font:400 15px/1 "Liberation Sans", sans-serif;color:#f4f4f4;'>Read</span>
<div class="a" style="left:114.6px;top:639.2px;width:110.6px;height:22px;border-radius:3px;background:linear-gradient(to bottom,#7c7c7c 0,#6a6a6a 30%,#555 55%,#444 80%,#333 100%);"></div>
<span class="t" style='left:149.01px;top:641.20px;font:400 15px/1 "Liberation Sans", sans-serif;color:#f4f4f4;'>Resp. time</span>
<div class="a" style="left:227.2px;top:639.2px;width:99.1px;height:22px;border-radius:3px;background:linear-gradient(to bottom,#7c7c7c 0,#6a6a6a 30%,#555 55%,#444 80%,#333 100%);"></div>
<span class="t" style='left:265.11px;top:641.20px;font:400 15px/1 "Liberation Sans", sans-serif;color:#f4f4f4;'>MB read</span>
<div class="a" style="left:328.3px;top:639.2px;width:110.6px;height:22px;border-radius:3px;background:linear-gradient(to bottom,#7c7c7c 0,#6a6a6a 30%,#555 55%,#444 80%,#333 100%);"></div>
<span class="t" style='left:398.56px;top:641.20px;font:400 15px/1 "Liberation Sans", sans-serif;color:#f4f4f4;'>IOPS</span>
<div class="a" style="left:441.2px;top:639.2px;width:109.3px;height:22px;border-radius:3px;background:linear-gradient(to bottom,#7c7c7c 0,#6a6a6a 30%,#555 55%,#444 80%,#333 100%);"></div>
<span class="t" style='left:511.83px;top:641.20px;font:400 15px/1 "Liberation Sans", sans-serif;color:#f4f4f4;'>MB/s</span>
<div class="a" style="left:23.0px;top:664.5px;width:89.2px;height:23.5px;border-radius:3px;box-sizing:border-box;border:1px solid #c4c4c4;background:linear-gradient(to bottom,#fdfdfd 0,#f1f1f1 55%,#e3e3e3 100%);"></div>
<span class="t" style='left:45.37px;top:670.47px;font:400 11.5px/1 "Liberation Sans", sans-serif;color:#222;letter-spacing:-0.405px;'>Seq 4MB</span>
<div class="a" style="left:114.6px;top:664.5px;width:110.6px;height:23.6px;border-radius:2px;background:linear-gradient(to bottom,#4380ff 0,#3f8aff 30%,#34a4ff 62%,#2fc2ff 100%);"></div>
<span class="t" style='left:148.44px;top:668.09px;font:700 15.6px/1 "Liberation Sans", sans-serif;color:#fff;'>2.2285ms</span>
<div class="a" style="left:227.2px;top:664.5px;width:99.1px;height:23.6px;border-radius:2px;background:linear-gradient(to bottom,#4380ff 0,#3f8aff 30%,#34a4ff 62%,#2fc2ff 100%);"></div>
<span class="t" style='left:269.05px;top:668.09px;font:700 15.6px/1 "Liberation Sans", sans-serif;color:#fff;'>2 048.0</span>
<div class="a" style="left:227.2px;top:664.5px;width:99.1px;height:23.6px;border-radius:2px;background:rgba(255,255,255,.17);"></div>
<div class="a" style="left:328.3px;top:664.5px;width:110.6px;height:23.6px;border-radius:2px;background:linear-gradient(to bottom,#efeeec 0,#e6e5e2 45%,#d2d1cd 100%);"></div>
<span class="t" style='left:386.19px;top:668.09px;font:700 15.6px/1 "Liberation Sans", sans-serif;color:#0b60c2;'>448.73</span>
<div class="a" style="left:441.2px;top:664.5px;width:109.3px;height:23.6px;border-radius:2px;background:linear-gradient(to bottom,#1b4dab 0,#185cc4 38%,#1370e6 72%,#0f7bf3 100%);"></div>
<span class="t" style='left:484.78px;top:668.09px;font:700 15.6px/1 "Liberation Sans", sans-serif;color:#fff;'>1 794.92</span>
<div class="a" style="left:23.0px;top:690.5px;width:89.2px;height:23.5px;border-radius:3px;box-sizing:border-box;border:1px solid #c4c4c4;background:linear-gradient(to bottom,#fdfdfd 0,#f1f1f1 55%,#e3e3e3 100%);"></div>
<span class="t" style='left:60.99px;top:696.47px;font:400 11.5px/1 "Liberation Sans", sans-serif;color:#222;letter-spacing:-0.422px;'>4K</span>
<div class="a" style="left:114.6px;top:690.5px;width:110.6px;height:23.6px;border-radius:2px;background:linear-gradient(to bottom,#4380ff 0,#3f8aff 30%,#34a4ff 62%,#2fc2ff 100%);"></div>
<span class="t" style='left:148.44px;top:694.09px;font:700 15.6px/1 "Liberation Sans", sans-serif;color:#fff;'>0.0774ms</span>
<div class="a" style="left:227.2px;top:690.5px;width:99.1px;height:23.6px;border-radius:2px;background:linear-gradient(to bottom,#4380ff 0,#3f8aff 30%,#34a4ff 62%,#2fc2ff 100%);"></div>
<span class="t" style='left:282.06px;top:694.09px;font:700 15.6px/1 "Liberation Sans", sans-serif;color:#fff;'>630.8</span>
<div class="a" style="left:328.3px;top:690.5px;width:110.6px;height:23.6px;border-radius:2px;background:linear-gradient(to bottom,#efeeec 0,#e6e5e2 45%,#d2d1cd 100%);"></div>
<span class="t" style='left:364.50px;top:694.09px;font:700 15.6px/1 "Liberation Sans", sans-serif;color:#0b60c2;'>12 918.06</span>
<div class="a" style="left:441.2px;top:690.5px;width:109.3px;height:23.6px;border-radius:2px;background:linear-gradient(to bottom,#1b4dab 0,#185cc4 38%,#1370e6 72%,#0f7bf3 100%);"></div>
<span class="t" style='left:506.46px;top:694.09px;font:700 15.6px/1 "Liberation Sans", sans-serif;color:#fff;'>50.46</span>
<div class="a" style="left:23.0px;top:716.5px;width:89.2px;height:23.5px;border-radius:3px;box-sizing:border-box;border:1px solid #c4c4c4;background:linear-gradient(to bottom,#fdfdfd 0,#f1f1f1 55%,#e3e3e3 100%);"></div>
<span class="t" style='left:48.37px;top:722.47px;font:400 11.5px/1 "Liberation Sans", sans-serif;color:#222;letter-spacing:-0.409px;'>4K QD4</span>
<div class="a" style="left:114.6px;top:716.5px;width:110.6px;height:23.6px;border-radius:2px;background:linear-gradient(to bottom,#4380ff 0,#3f8aff 30%,#34a4ff 62%,#2fc2ff 100%);"></div>
<span class="t" style='left:148.44px;top:720.09px;font:700 15.6px/1 "Liberation Sans", sans-serif;color:#fff;'>0.0755ms</span>
<div class="a" style="left:227.2px;top:716.5px;width:99.1px;height:23.6px;border-radius:2px;background:linear-gradient(to bottom,#4380ff 0,#3f8aff 30%,#34a4ff 62%,#2fc2ff 100%);"></div>
<span class="t" style='left:269.05px;top:720.09px;font:700 15.6px/1 "Liberation Sans", sans-serif;color:#fff;'>2 586.4</span>
<div class="a" style="left:328.3px;top:716.5px;width:110.6px;height:23.6px;border-radius:2px;background:linear-gradient(to bottom,#efeeec 0,#e6e5e2 45%,#d2d1cd 100%);"></div>
<span class="t" style='left:364.50px;top:720.09px;font:700 15.6px/1 "Liberation Sans", sans-serif;color:#0b60c2;'>52 969.66</span>
<div class="a" style="left:441.2px;top:716.5px;width:109.3px;height:23.6px;border-radius:2px;background:linear-gradient(to bottom,#1b4dab 0,#185cc4 38%,#1370e6 72%,#0f7bf3 100%);"></div>
<span class="t" style='left:497.79px;top:720.09px;font:700 15.6px/1 "Liberation Sans", sans-serif;color:#fff;'>206.91</span>
<div class="a" style="left:23.0px;top:742.5px;width:89.2px;height:23.5px;border-radius:3px;box-sizing:border-box;border:1px solid #c4c4c4;background:linear-gradient(to bottom,#fdfdfd 0,#f1f1f1 55%,#e3e3e3 100%);"></div>
<span class="t" style='left:45.37px;top:748.47px;font:400 11.5px/1 "Liberation Sans", sans-serif;color:#222;letter-spacing:-0.405px;'>4K QD16</span>
<div class="a" style="left:114.6px;top:742.5px;width:110.6px;height:23.6px;border-radius:2px;background:linear-gradient(to bottom,#4380ff 0,#3f8aff 30%,#34a4ff 62%,#2fc2ff 100%);"></div>
<span class="t" style='left:148.44px;top:746.09px;font:700 15.6px/1 "Liberation Sans", sans-serif;color:#fff;'>0.0898ms</span>
<div class="a" style="left:227.2px;top:742.5px;width:99.1px;height:23.6px;border-radius:2px;background:linear-gradient(to bottom,#4380ff 0,#3f8aff 30%,#34a4ff 62%,#2fc2ff 100%);"></div>
<span class="t" style='left:269.05px;top:746.09px;font:700 15.6px/1 "Liberation Sans", sans-serif;color:#fff;'>8 702.0</span>
<div class="a" style="left:328.3px;top:742.5px;width:110.6px;height:23.6px;border-radius:2px;background:linear-gradient(to bottom,#efeeec 0,#e6e5e2 45%,#d2d1cd 100%);"></div>
<span class="t" style='left:355.82px;top:746.09px;font:700 15.6px/1 "Liberation Sans", sans-serif;color:#0b60c2;'>178 215.42</span>
<div class="a" style="left:441.2px;top:742.5px;width:109.3px;height:23.6px;border-radius:2px;background:linear-gradient(to bottom,#1b4dab 0,#185cc4 38%,#1370e6 72%,#0f7bf3 100%);"></div>
<span class="t" style='left:497.79px;top:746.09px;font:700 15.6px/1 "Liberation Sans", sans-serif;color:#fff;'>696.15</span>
<div class="a" style="left:23.0px;top:768.5px;width:89.2px;height:23.5px;border-radius:3px;box-sizing:border-box;border:1px solid #c4c4c4;background:linear-gradient(to bottom,#fdfdfd 0,#f1f1f1 55%,#e3e3e3 100%);"></div>
<span class="t" style='left:57.98px;top:774.47px;font:400 11.5px/1 "Liberation Sans", sans-serif;color:#222;letter-spacing:-0.409px;'>32K</span>
<div class="a" style="left:114.6px;top:768.5px;width:110.6px;height:23.6px;border-radius:2px;background:linear-gradient(to bottom,#4380ff 0,#3f8aff 30%,#34a4ff 62%,#2fc2ff 100%);"></div>
<span class="t" style='left:149.30px;top:772.09px;font:700 15.6px/1 "Liberation Sans", sans-serif;color:#fff;'>0.1154ms</span>
<div class="a" style="left:227.2px;top:768.5px;width:99.1px;height:23.6px;border-radius:2px;background:linear-gradient(to bottom,#4380ff 0,#3f8aff 30%,#34a4ff 62%,#2fc2ff 100%);"></div>
<span class="t" style='left:269.05px;top:772.09px;font:700 15.6px/1 "Liberation Sans", sans-serif;color:#fff;'>4 000.0</span>
<div class="a" style="left:328.3px;top:768.5px;width:110.6px;height:23.6px;border-radius:2px;background:linear-gradient(to bottom,#efeeec 0,#e6e5e2 45%,#d2d1cd 100%);"></div>
<span class="t" style='left:373.18px;top:772.09px;font:700 15.6px/1 "Liberation Sans", sans-serif;color:#0b60c2;'>8 669.15</span>
<div class="a" style="left:441.2px;top:768.5px;width:109.3px;height:23.6px;border-radius:2px;background:linear-gradient(to bottom,#1b4dab 0,#185cc4 38%,#1370e6 72%,#0f7bf3 100%);"></div>
<span class="t" style='left:497.79px;top:772.09px;font:700 15.6px/1 "Liberation Sans", sans-serif;color:#fff;'>270.91</span>
<div class="a" style="left:23.0px;top:794.5px;width:89.2px;height:23.5px;border-radius:3px;box-sizing:border-box;border:1px solid #c4c4c4;background:linear-gradient(to bottom,#fdfdfd 0,#f1f1f1 55%,#e3e3e3 100%);"></div>
<span class="t" style='left:54.98px;top:800.47px;font:400 11.5px/1 "Liberation Sans", sans-serif;color:#222;letter-spacing:-0.403px;'>128K</span>
<div class="a" style="left:114.6px;top:794.5px;width:110.6px;height:23.6px;border-radius:2px;background:linear-gradient(to bottom,#4380ff 0,#3f8aff 30%,#34a4ff 62%,#2fc2ff 100%);"></div>
<span class="t" style='left:148.44px;top:798.09px;font:700 15.6px/1 "Liberation Sans", sans-serif;color:#fff;'>0.1531ms</span>
<div class="a" style="left:227.2px;top:794.5px;width:99.1px;height:23.6px;border-radius:2px;background:linear-gradient(to bottom,#4380ff 0,#3f8aff 30%,#34a4ff 62%,#2fc2ff 100%);"></div>
<span class="t" style='left:260.38px;top:798.09px;font:700 15.6px/1 "Liberation Sans", sans-serif;color:#fff;'>12 260.5</span>
<div class="a" style="left:328.3px;top:794.5px;width:110.6px;height:23.6px;border-radius:2px;background:linear-gradient(to bottom,#efeeec 0,#e6e5e2 45%,#d2d1cd 100%);"></div>
<span class="t" style='left:373.18px;top:798.09px;font:700 15.6px/1 "Liberation Sans", sans-serif;color:#0b60c2;'>6 531.97</span>
<div class="a" style="left:441.2px;top:794.5px;width:109.3px;height:23.6px;border-radius:2px;background:linear-gradient(to bottom,#1b4dab 0,#185cc4 38%,#1370e6 72%,#0f7bf3 100%);"></div>
<span class="t" style='left:497.79px;top:798.09px;font:700 15.6px/1 "Liberation Sans", sans-serif;color:#fff;'>816.50</span>
<div class="a" style="left:23.0px;top:829.2px;width:89.2px;height:22px;border-radius:3px;background:linear-gradient(to bottom,#7c7c7c 0,#6a6a6a 30%,#555 55%,#444 80%,#333 100%);"></div>
<span class="t" style='left:72.98px;top:831.20px;font:400 15px/1 "Liberation Sans", sans-serif;color:#f4f4f4;'>Write</span>
<div class="a" style="left:114.6px;top:829.2px;width:110.6px;height:22px;border-radius:3px;background:linear-gradient(to bottom,#7c7c7c 0,#6a6a6a 30%,#555 55%,#444 80%,#333 100%);"></div>
<span class="t" style='left:149.01px;top:831.20px;font:400 15px/1 "Liberation Sans", sans-serif;color:#f4f4f4;'>Resp. time</span>
<div class="a" style="left:227.2px;top:829.2px;width:99.1px;height:22px;border-radius:3px;background:linear-gradient(to bottom,#7c7c7c 0,#6a6a6a 30%,#555 55%,#444 80%,#333 100%);"></div>
<span class="t" style='left:250.95px;top:831.20px;font:400 15px/1 "Liberation Sans", sans-serif;color:#f4f4f4;'>MB written</span>
<div class="a" style="left:328.3px;top:829.2px;width:110.6px;height:22px;border-radius:3px;background:linear-gradient(to bottom,#7c7c7c 0,#6a6a6a 30%,#555 55%,#444 80%,#333 100%);"></div>
<span class="t" style='left:398.56px;top:831.20px;font:400 15px/1 "Liberation Sans", sans-serif;color:#f4f4f4;'>IOPS</span>
<div class="a" style="left:441.2px;top:829.2px;width:109.3px;height:22px;border-radius:3px;background:linear-gradient(to bottom,#7c7c7c 0,#6a6a6a 30%,#555 55%,#444 80%,#333 100%);"></div>
<span class="t" style='left:511.83px;top:831.20px;font:400 15px/1 "Liberation Sans", sans-serif;color:#f4f4f4;'>MB/s</span>
<div class="a" style="left:23.0px;top:854.5px;width:89.2px;height:23.5px;border-radius:3px;box-sizing:border-box;border:1px solid #c4c4c4;background:linear-gradient(to bottom,#fdfdfd 0,#f1f1f1 55%,#e3e3e3 100%);"></div>
<span class="t" style='left:45.37px;top:860.47px;font:400 11.5px/1 "Liberation Sans", sans-serif;color:#222;letter-spacing:-0.405px;'>Seq 4MB</span>
<div class="a" style="left:114.6px;top:854.5px;width:110.6px;height:23.6px;border-radius:2px;background:linear-gradient(to bottom,#4380ff 0,#3f8aff 30%,#34a4ff 62%,#2fc2ff 100%);"></div>
<span class="t" style='left:148.44px;top:858.09px;font:700 15.6px/1 "Liberation Sans", sans-serif;color:#fff;'>2.7461ms</span>
<div class="a" style="left:227.2px;top:854.5px;width:99.1px;height:23.6px;border-radius:2px;background:linear-gradient(to bottom,#4380ff 0,#3f8aff 30%,#34a4ff 62%,#2fc2ff 100%);"></div>
<span class="t" style='left:269.05px;top:858.09px;font:700 15.6px/1 "Liberation Sans", sans-serif;color:#fff;'>1 024.0</span>
<div class="a" style="left:328.3px;top:854.5px;width:110.6px;height:23.6px;border-radius:2px;background:linear-gradient(to bottom,#efeeec 0,#e6e5e2 45%,#d2d1cd 100%);"></div>
<span class="t" style='left:386.19px;top:858.09px;font:700 15.6px/1 "Liberation Sans", sans-serif;color:#0b60c2;'>364.15</span>
<div class="a" style="left:441.2px;top:854.5px;width:109.3px;height:23.6px;border-radius:2px;background:linear-gradient(to bottom,#1b4dab 0,#185cc4 38%,#1370e6 72%,#0f7bf3 100%);"></div>
<span class="t" style='left:484.78px;top:858.09px;font:700 15.6px/1 "Liberation Sans", sans-serif;color:#fff;'>1 456.61</span>
<div class="a" style="left:23.0px;top:880.5px;width:89.2px;height:23.5px;border-radius:3px;box-sizing:border-box;border:1px solid #c4c4c4;background:linear-gradient(to bottom,#fdfdfd 0,#f1f1f1 55%,#e3e3e3 100%);"></div>
<span class="t" style='left:60.99px;top:886.47px;font:400 11.5px/1 "Liberation Sans", sans-serif;color:#222;letter-spacing:-0.422px;'>4K</span>
<div class="a" style="left:114.6px;top:880.5px;width:110.6px;height:23.6px;border-radius:2px;background:linear-gradient(to bottom,#4380ff 0,#3f8aff 30%,#34a4ff 62%,#2fc2ff 100%);"></div>
<span class="t" style='left:148.44px;top:884.09px;font:700 15.6px/1 "Liberation Sans", sans-serif;color:#fff;'>0.0293ms</span>
<div class="a" style="left:227.2px;top:880.5px;width:99.1px;height:23.6px;border-radius:2px;background:linear-gradient(to bottom,#4380ff 0,#3f8aff 30%,#34a4ff 62%,#2fc2ff 100%);"></div>
<span class="t" style='left:282.06px;top:884.09px;font:700 15.6px/1 "Liberation Sans", sans-serif;color:#fff;'>640.0</span>
<div class="a" style="left:114.6px;top:880.5px;width:110.6px;height:23.6px;border-radius:2px;background:linear-gradient(to right,rgba(255,255,255,.26) 0,rgba(255,255,255,.22) 45%,rgba(255,255,255,0) 72%);"></div>
<div class="a" style="left:328.3px;top:880.5px;width:110.6px;height:23.6px;border-radius:2px;background:linear-gradient(to bottom,#efeeec 0,#e6e5e2 45%,#d2d1cd 100%);"></div>
<span class="t" style='left:364.50px;top:884.09px;font:700 15.6px/1 "Liberation Sans", sans-serif;color:#0b60c2;'>34 121.13</span>
<div class="a" style="left:441.2px;top:880.5px;width:109.3px;height:23.6px;border-radius:2px;background:linear-gradient(to bottom,#1b4dab 0,#185cc4 38%,#1370e6 72%,#0f7bf3 100%);"></div>
<span class="t" style='left:497.79px;top:884.09px;font:700 15.6px/1 "Liberation Sans", sans-serif;color:#fff;'>133.29</span>
<div class="a" style="left:23.0px;top:906.5px;width:89.2px;height:23.5px;border-radius:3px;box-sizing:border-box;border:1px solid #c4c4c4;background:linear-gradient(to bottom,#fdfdfd 0,#f1f1f1 55%,#e3e3e3 100%);"></div>
<span class="t" style='left:48.37px;top:912.47px;font:400 11.5px/1 "Liberation Sans", sans-serif;color:#222;letter-spacing:-0.409px;'>4K QD4</span>
<div class="a" style="left:114.6px;top:906.5px;width:110.6px;height:23.6px;border-radius:2px;background:linear-gradient(to bottom,#4380ff 0,#3f8aff 30%,#34a4ff 62%,#2fc2ff 100%);"></div>
<span class="t" style='left:148.44px;top:910.09px;font:700 15.6px/1 "Liberation Sans", sans-serif;color:#fff;'>0.0318ms</span>
<div class="a" style="left:227.2px;top:906.5px;width:99.1px;height:23.6px;border-radius:2px;background:linear-gradient(to bottom,#4380ff 0,#3f8aff 30%,#34a4ff 62%,#2fc2ff 100%);"></div>
<span class="t" style='left:282.06px;top:910.09px;font:700 15.6px/1 "Liberation Sans", sans-serif;color:#fff;'>640.0</span>
<div class="a" style="left:114.6px;top:906.5px;width:110.6px;height:23.6px;border-radius:2px;background:linear-gradient(to right,rgba(255,255,255,.26) 0,rgba(255,255,255,.22) 45%,rgba(255,255,255,0) 72%);"></div>
<div class="a" style="left:328.3px;top:906.5px;width:110.6px;height:23.6px;border-radius:2px;background:linear-gradient(to bottom,#efeeec 0,#e6e5e2 45%,#d2d1cd 100%);"></div>
<span class="t" style='left:355.82px;top:910.09px;font:700 15.6px/1 "Liberation Sans", sans-serif;color:#0b60c2;'>125 647.70</span>
<div class="a" style="left:441.2px;top:906.5px;width:109.3px;height:23.6px;border-radius:2px;background:linear-gradient(to bottom,#1b4dab 0,#185cc4 38%,#1370e6 72%,#0f7bf3 100%);"></div>
<span class="t" style='left:497.79px;top:910.09px;font:700 15.6px/1 "Liberation Sans", sans-serif;color:#fff;'>490.81</span>
<div class="a" style="left:23.0px;top:932.5px;width:89.2px;height:23.5px;border-radius:3px;box-sizing:border-box;border:1px solid #c4c4c4;background:linear-gradient(to bottom,#fdfdfd 0,#f1f1f1 55%,#e3e3e3 100%);"></div>
<span class="t" style='left:45.37px;top:938.47px;font:400 11.5px/1 "Liberation Sans", sans-serif;color:#222;letter-spacing:-0.405px;'>4K QD16</span>
<div class="a" style="left:114.6px;top:932.5px;width:110.6px;height:23.6px;border-radius:2px;background:linear-gradient(to bottom,#4380ff 0,#3f8aff 30%,#34a4ff 62%,#2fc2ff 100%);"></div>
<span class="t" style='left:148.44px;top:936.09px;font:700 15.6px/1 "Liberation Sans", sans-serif;color:#fff;'>0.0748ms</span>
<div class="a" style="left:227.2px;top:932.5px;width:99.1px;height:23.6px;border-radius:2px;background:linear-gradient(to bottom,#4380ff 0,#3f8aff 30%,#34a4ff 62%,#2fc2ff 100%);"></div>
<span class="t" style='left:282.06px;top:936.09px;font:700 15.6px/1 "Liberation Sans", sans-serif;color:#fff;'>640.0</span>
<div class="a" style="left:114.6px;top:932.5px;width:110.6px;height:23.6px;border-radius:2px;background:linear-gradient(to right,rgba(255,255,255,.26) 0,rgba(255,255,255,.22) 45%,rgba(255,255,255,0) 72%);"></div>
<div class="a" style="left:328.3px;top:932.5px;width:110.6px;height:23.6px;border-radius:2px;background:linear-gradient(to bottom,#efeeec 0,#e6e5e2 45%,#d2d1cd 100%);"></div>
<span class="t" style='left:355.82px;top:936.09px;font:700 15.6px/1 "Liberation Sans", sans-serif;color:#0b60c2;'>213 855.91</span>
<div class="a" style="left:441.2px;top:932.5px;width:109.3px;height:23.6px;border-radius:2px;background:linear-gradient(to bottom,#1b4dab 0,#185cc4 38%,#1370e6 72%,#0f7bf3 100%);"></div>
<span class="t" style='left:497.79px;top:936.09px;font:700 15.6px/1 "Liberation Sans", sans-serif;color:#fff;'>835.37</span>
<div class="a" style="left:561px;top:739px;width:59.5px;height:26px;border-radius:3px;box-sizing:border-box;border:1px solid #c0c0c0;background:linear-gradient(to bottom,#fafafa,#ececec 60%,#e2e2e2);"></div>
<span class="t" style='left:568.70px;top:746.47px;font:400 11.5px/1 "Liberation Sans", sans-serif;color:#222;letter-spacing:-0.414px;'>Run read</span>
<div class="a" style="left:561px;top:892.3px;width:59.5px;height:25px;border-radius:3px;box-sizing:border-box;border:1px solid #c0c0c0;background:linear-gradient(to bottom,#fafafa,#ececec 60%,#e2e2e2);"></div>
<span class="t" style='left:568.20px;top:899.27px;font:400 11.5px/1 "Liberation Sans", sans-serif;color:#222;letter-spacing:-0.397px;'>Run write</span>
<div class="a" style="left:561px;top:804px;width:60px;height:40.5px;border-radius:3px;box-sizing:border-box;border:1px solid #6c6c6c;background:linear-gradient(to bottom,#b2b2b2,#a4a4a4);"></div>
<span class="t" style='left:568.93px;top:812.95px;font:700 22.5px/1 "Liberation Sans", sans-serif;color:#3c3c3c;'>Run</span>
<div class="a" style="left:636.3px;top:727.3px;width:109.4px;height:44px;border-radius:2px;background:linear-gradient(to bottom,#1752ae 0,#1762c8 45%,#1972e6 100%);"></div>
<span class="t" style='left:638.30px;top:729.67px;font:400 11.5px/1 "Liberation Sans", sans-serif;color:#fff;letter-spacing:-0.221px;'>5 304.93</span>
<span class="t" style='left:667.30px;top:739.62px;font:400 18.4px/1 "Liberation Sans", sans-serif;color:#fff;letter-spacing:0.360px;'>5 304.93</span>
<div class="a" style="left:636.3px;top:881.2px;width:109px;height:45px;border-radius:2px;background:linear-gradient(to bottom,#1752ae 0,#1762c8 45%,#1972e6 100%);"></div>
<span class="t" style='left:638.30px;top:883.67px;font:400 11.5px/1 "Liberation Sans", sans-serif;color:#fff;letter-spacing:-0.221px;'>5 968.32</span>
<span class="t" style='left:667.30px;top:894.02px;font:400 18.4px/1 "Liberation Sans", sans-serif;color:#fff;letter-spacing:0.360px;'>5 968.32</span>
<div class="a" style="left:686.6px;top:799.5px;width:122.6px;height:47.7px;border-radius:2px;background:radial-gradient(ellipse 70% 80% at 55% 85%,#f49a2a 0,#f6a838 45%,#fbc774 80%,#fdd490 100%);"></div>
<span class="t" style='left:689.00px;top:802.47px;font:700 11.5px/1 "Liberation Sans", sans-serif;color:#000;letter-spacing:0.386px;'>11 273.24</span>
<span class="t" style='left:708.30px;top:812.81px;font:700 19.6px/1 "Liberation Sans", sans-serif;color:#13306e;letter-spacing:0.876px;'>11 273.24</span>
<div class="a" style="left:6.8px;top:982.8px;width:838.7px;height:111.2px;background:#343434;"></div>
<span class="t" style='left:22.50px;top:992.49px;font:400 11px/1 "Liberation Sans", sans-serif;color:#d6d6d6;letter-spacing:-0.029px;'>Майкрософт Windows 10 Домашняя для одного языка 64-разрядная</span>
<span class="t" style='left:22.50px;top:1008.69px;font:400 11px/1 "Liberation Sans", sans-serif;color:#d6d6d6;letter-spacing:-0.402px;'>BBR-WAX9-PCB/3.02, CPU0</span>
<span class="t" style='left:22.50px;top:1026.19px;font:400 11px/1 "Liberation Sans", sans-serif;color:#d6d6d6;letter-spacing:-0.243px;'>Intel(R) Core(TM) i5-10210U CPU @ 1.60GHz</span>
<span class="t" style='left:22.50px;top:1043.29px;font:400 11px/1 "Liberation Sans", sans-serif;color:#d6d6d6;letter-spacing:-0.234px;'>Memory : 8 025 MB</span>
<span class="t" style='left:24.60px;top:1062.63px;font:700 13.2px/1 "Liberation Sans", sans-serif;color:#0f8dff;letter-spacing:-0.106px;'>Professional Edition</span>
<div class="a" style="left:329px;top:991px;width:291px;height:94.6px;background:#fff;border-radius:5px;"></div>
<span class="t" style='left:341.10px;top:1002.93px;font:400 14.5px/1 "Liberation Sans", sans-serif;color:#2a7ee6;letter-spacing:0.232px;'>Drives :</span>
<span class="t" style='left:341.10px;top:1023.93px;font:400 14.5px/1 "Liberation Sans", sans-serif;color:#2a7ee6;letter-spacing:0.295px;'>Notes :</span>
<div class="a" style="left:628px;top:986px;width:217.5px;height:18px;overflow:hidden"><span class="t" style='left:0;top:4.05px;font:700 11.3px/1 "Liberation Sans",sans-serif;color:#d6d6d6;letter-spacing:0.05px'>KXG60ZNV512G TOSHIBA 512GB/AGXA4103</span></div>
<span class="t" style='left:627.30px;top:1004.23px;font:400 11.3px/1 "Liberation Sans", sans-serif;color:#d6d6d6;letter-spacing:-0.094px;'>Drive D: 341.3/320.0GB free (93.7%)</span>
<span class="t" style='left:627.30px;top:1018.03px;font:400 11.3px/1 "Liberation Sans", sans-serif;color:#d6d6d6;letter-spacing:-0.455px;'>NTFS - Cluster size 4096B</span>
<span class="t" style='left:627.30px;top:1032.13px;font:400 11.3px/1 "Liberation Sans", sans-serif;color:#d6d6d6;letter-spacing:-0.177px;'>Storage driver</span>
<span class="t" style='left:703.00px;top:1032.13px;font:700 11.3px/1 "Liberation Sans", sans-serif;color:#d6d6d6;letter-spacing:0.517px;'>stornvme</span>
<span class="t" style='left:625.90px;top:1060.13px;font:400 11.3px/1 "Liberation Sans", sans-serif;color:#d6d6d6;letter-spacing:-0.467px;'>Alignment 119808KB OK</span>
<span class="t" style='left:625.90px;top:1074.23px;font:400 11.3px/1 "Liberation Sans", sans-serif;color:#d6d6d6;letter-spacing:-0.326px;'>Compression 100% (Incompressible)</span>
<div class="a" style="left:858px;top:749px;width:682px;height:352px;background:#202020;box-sizing:border-box;border:1px solid #d04040;border-top-color:#e08050;"></div>
<div class="a" style="left:859px;top:750px;width:680px;height:50.3px;background:#fff;"></div>
<div class="a" style="left:858px;top:749px;width:682px;height:1px;background:linear-gradient(to right,#e01818,#e83020 10%,#f09040 18%,#f08030 28%,#d04a6a 36%,#6a3ab0 45%,#d04a6a 60%,#f08030 75%,#e85030);"></div>
<div class="a" style="left:858px;top:749px;width:1px;height:352px;background:linear-gradient(to bottom,#e01818,#e02020 50%,#c01818);"></div>
<div class="a" style="left:1539px;top:749px;width:1px;height:352px;background:linear-gradient(to bottom,#f09040,#e04040 50%,#f07030);"></div>
<svg class="a" style="left:866px;top:755px" width="18" height="18" viewBox="0 0 18 18"><rect x="1" y="1" width="16" height="3.7" fill="#1faa1f"/><rect x="2" y="2.2" width="13" height="1" fill="#58cc58"/><rect x="1" y="4.7" width="12" height="3.1" fill="#1faa1f"/><rect x="2" y="5.7" width="8" height="1" fill="#58cc58"/><rect x="1.4" y="9.4" width="15.2" height="7.2" rx="1.6" fill="#dcdce0" stroke="#8c8c8c" stroke-width=".9"/><rect x="12.8" y="12" width="1.9" height="3.3" fill="#28b428"/></svg>
<span class="t" style='left:888.70px;top:758.94px;font:400 12px/1 "Liberation Sans", sans-serif;color:#000;letter-spacing:-0.153px;'>CrystalDiskMark 8.0.1 x64 [Admin]</span>
<svg class="a" style="left:0;top:0" width="1801" height="1101" viewBox="0 0 1801 1101" fill="none"><path d="M1419.5 764.5h10" stroke="#000" stroke-width="1"/><rect x="1465.5" y="759.5" width="9" height="9" stroke="#ccc" stroke-width="1"/><path d="M1511 759l10 10M1521 759l-10 10" stroke="#000" stroke-width="1.1"/></svg>
<span class="t" style='left:866.40px;top:784.04px;font:400 12px/1 "Liberation Sans", sans-serif;color:#000;letter-spacing:-0.250px;'>Файл</span>
<span class="t" style='left:909.00px;top:784.04px;font:400 12px/1 "Liberation Sans", sans-serif;color:#000;letter-spacing:0.073px;'>Настройки</span>
<span class="t" style='left:983.50px;top:784.04px;font:400 12px/1 "Liberation Sans", sans-serif;color:#000;letter-spacing:0.028px;'>Профиль</span>
<span class="t" style='left:1049.00px;top:784.04px;font:400 12px/1 "Liberation Sans", sans-serif;color:#000;letter-spacing:-0.403px;'>Вид</span>
<span class="t" style='left:1083.50px;top:784.04px;font:400 12px/1 "Liberation Sans", sans-serif;color:#000;letter-spacing:-0.153px;'>Справка</span>
<span class="t" style='left:1142.90px;top:784.04px;font:400 12px/1 "Liberation Sans", sans-serif;color:#000;letter-spacing:-0.173px;'>Язык(Language)</span>
<div class="a" style="left:867px;top:808px;width:72.2px;height:47.8px;box-sizing:border-box;border:1px solid #505050;background:#2e2e2e;"></div>
<span class="t" style='left:891.75px;top:824.66px;font:700 16px/1 "Liberation Sans", sans-serif;color:#fff;letter-spacing:0.352px;'>All</span>
<svg class="a" style="left:930.5px;top:847px" width="8" height="8"><path d="M8 0v8H0z" fill="#fff"/></svg>
<div class="a" style="left:943px;top:808.5px;width:39.7px;height:22.9px;background:#fff;"></div>
<div class="a" style="left:946px;top:811.3px;width:17.000000000000004px;height:17.4px;background:#202020;"></div>
<span class="t" style='left:950.30px;top:813.30px;font:400 15px/1 "Liberation Sans", sans-serif;color:#fff;'>5</span>
<svg class="a" style="left:969.3000000000001px;top:817.8px" width="9" height="6" fill="none"><path d="M0.5 0.8l4 4l4-4" stroke="#555" stroke-width="1.1"/></svg>
<div class="a" style="left:987.7px;top:808.5px;width:79px;height:22.9px;background:#fff;"></div>
<div class="a" style="left:990.7px;top:811.3px;width:56.3px;height:17.4px;background:#202020;"></div>
<span class="t" style='left:995.00px;top:813.30px;font:400 15px/1 "Liberation Sans", sans-serif;color:#fff;letter-spacing:-0.412px;'>1GiB</span>
<svg class="a" style="left:1053.3px;top:817.8px" width="9" height="6" fill="none"><path d="M0.5 0.8l4 4l4-4" stroke="#555" stroke-width="1.1"/></svg>
<div class="a" style="left:1071.3px;top:808.5px;width:259.4px;height:22.9px;background:#fff;"></div>
<div class="a" style="left:1074.3px;top:811.3px;width:236.7px;height:17.4px;background:#202020;"></div>
<span class="t" style='left:1078.60px;top:813.30px;font:400 15px/1 "Liberation Sans", sans-serif;color:#fff;letter-spacing:0.170px;'>C: 34% (41/120GiB)</span>
<svg class="a" style="left:1317.2999999999997px;top:817.8px" width="9" height="6" fill="none"><path d="M0.5 0.8l4 4l4-4" stroke="#555" stroke-width="1.1"/></svg>
<div class="a" style="left:1339.2px;top:808.5px;width:191.6px;height:22.9px;background:#fff;"></div>
<div class="a" style="left:1342.2px;top:811.3px;width:168.9px;height:17.4px;background:#202020;"></div>
<span class="t" style='left:1346.50px;top:813.30px;font:400 15px/1 "Liberation Sans", sans-serif;color:#fff;letter-spacing:0.533px;'>R70%/W30%</span>
<svg class="a" style="left:1517.3999999999999px;top:817.8px" width="9" height="6" fill="none"><path d="M0.5 0.8l4 4l4-4" stroke="#555" stroke-width="1.1"/></svg>
<span class="t" style='left:992.70px;top:841.10px;font:700 15px/1 "Liberation Sans", sans-serif;color:#fff;letter-spacing:0.448px;'>Read (MB/s)</span>
<span class="t" style='left:1186.15px;top:841.10px;font:700 15px/1 "Liberation Sans", sans-serif;color:#fff;letter-spacing:0.773px;'>Write (MB/s)</span>
<span class="t" style='left:1393.15px;top:841.10px;font:700 15px/1 "Liberation Sans", sans-serif;color:#fff;letter-spacing:0.850px;'>Mix (MB/s)</span>
<div class="a" style="left:867px;top:860.3px;width:72.2px;height:47.6px;box-sizing:border-box;border:1px solid #505050;background:#232323;"></div>
<span class="t" style='left:882.15px;top:867.60px;font:700 12.4px/1 "Liberation Sans", sans-serif;color:#fff;letter-spacing:-0.542px;'>SEQ1M</span>
<span class="t" style='left:887.90px;top:887.60px;font:700 12.4px/1 "Liberation Sans", sans-serif;color:#fff;letter-spacing:-0.453px;'>Q1T1</span>
<div class="a" style="left:943px;top:860.3px;width:192.5px;height:47.6px;box-sizing:border-box;border:1px solid #505050;background:linear-gradient(to right,#363636 0,#363636 67.1%,#202020 67.1%,#202020 100%);"></div>
<span class="t" style='left:1003.86px;top:868.80px;font:700 35.2px/1 "Liberation Sans", sans-serif;color:#fff;'>1087.31</span>
<div class="a" style="left:1139.2px;top:860.3px;width:191.6px;height:47.6px;box-sizing:border-box;border:1px solid #505050;background:linear-gradient(to right,#363636 0,#363636 67.1%,#202020 67.1%,#202020 100%);"></div>
<span class="t" style='left:1199.16px;top:868.80px;font:700 35.2px/1 "Liberation Sans", sans-serif;color:#fff;'>1078.65</span>
<div class="a" style="left:1339.2px;top:860.3px;width:191.7px;height:47.6px;box-sizing:border-box;border:1px solid #505050;background:linear-gradient(to right,#363636 0,#363636 65.6%,#202020 65.6%,#202020 100%);"></div>
<span class="t" style='left:1418.84px;top:868.80px;font:700 35.2px/1 "Liberation Sans", sans-serif;color:#fff;'>883.80</span>
<div class="a" style="left:867px;top:912.4px;width:72.2px;height:47.6px;box-sizing:border-box;border:1px solid #505050;background:#232323;"></div>
<span class="t" style='left:881.50px;top:919.70px;font:700 12.4px/1 "Liberation Sans", sans-serif;color:#fff;letter-spacing:-0.143px;'>RND4K</span>
<span class="t" style='left:887.90px;top:939.70px;font:700 12.4px/1 "Liberation Sans", sans-serif;color:#fff;letter-spacing:-0.453px;'>Q1T1</span>
<div class="a" style="left:943px;top:912.4px;width:192.5px;height:47.6px;box-sizing:border-box;border:1px solid #505050;background:linear-gradient(to right,#363636 0,#363636 45.3%,#202020 45.3%,#202020 100%);"></div>
<span class="t" style='left:1043.01px;top:920.90px;font:700 35.2px/1 "Liberation Sans", sans-serif;color:#fff;'>53.60</span>
<div class="a" style="left:1139.2px;top:912.4px;width:191.6px;height:47.6px;box-sizing:border-box;border:1px solid #505050;background:linear-gradient(to right,#363636 0,#363636 52.0%,#202020 52.0%,#202020 100%);"></div>
<span class="t" style='left:1218.74px;top:920.90px;font:700 35.2px/1 "Liberation Sans", sans-serif;color:#fff;'>146.71</span>
<div class="a" style="left:1339.2px;top:912.4px;width:191.7px;height:47.6px;box-sizing:border-box;border:1px solid #505050;background:linear-gradient(to right,#363636 0,#363636 46.3%,#202020 46.3%,#202020 100%);"></div>
<span class="t" style='left:1438.41px;top:920.90px;font:700 35.2px/1 "Liberation Sans", sans-serif;color:#fff;'>64.16</span>
<div class="a" style="left:867px;top:964.5px;width:72.2px;height:47.6px;box-sizing:border-box;border:1px solid #505050;background:#232323;"></div>
<span class="t" style='left:881.50px;top:971.80px;font:700 12.4px/1 "Liberation Sans", sans-serif;color:#fff;letter-spacing:-0.143px;'>RND4K</span>
<span class="t" style='left:884.75px;top:991.80px;font:700 12.4px/1 "Liberation Sans", sans-serif;color:#fff;letter-spacing:-0.398px;'>(IOPS)</span>
<div class="a" style="left:943px;top:964.5px;width:192.5px;height:47.6px;box-sizing:border-box;border:1px solid #505050;background:linear-gradient(to right,#363636 0,#363636 45.3%,#202020 45.3%,#202020 100%);"></div>
<span class="t" style='left:984.28px;top:973.00px;font:700 35.2px/1 "Liberation Sans", sans-serif;color:#fff;'>13086.43</span>
<div class="a" style="left:1139.2px;top:964.5px;width:191.6px;height:47.6px;box-sizing:border-box;border:1px solid #505050;background:linear-gradient(to right,#363636 0,#363636 52.0%,#202020 52.0%,#202020 100%);"></div>
<span class="t" style='left:1179.58px;top:973.00px;font:700 35.2px/1 "Liberation Sans", sans-serif;color:#fff;'>35816.65</span>
<div class="a" style="left:1339.2px;top:964.5px;width:191.7px;height:47.6px;box-sizing:border-box;border:1px solid #505050;background:linear-gradient(to right,#363636 0,#363636 46.3%,#202020 46.3%,#202020 100%);"></div>
<span class="t" style='left:1379.68px;top:973.00px;font:700 35.2px/1 "Liberation Sans", sans-serif;color:#fff;'>15664.06</span>
<div class="a" style="left:867px;top:1016.6px;width:72.2px;height:47.6px;box-sizing:border-box;border:1px solid #505050;background:#232323;"></div>
<span class="t" style='left:881.50px;top:1023.90px;font:700 12.4px/1 "Liberation Sans", sans-serif;color:#fff;letter-spacing:-0.143px;'>RND4K</span>
<span class="t" style='left:892.00px;top:1043.90px;font:700 12.4px/1 "Liberation Sans", sans-serif;color:#fff;letter-spacing:-0.435px;'>(μs)</span>
<div class="a" style="left:943px;top:1016.6px;width:192.5px;height:47.6px;box-sizing:border-box;border:1px solid #505050;background:linear-gradient(to right,#363636 0,#363636 68.0%,#202020 68.0%,#202020 100%);"></div>
<span class="t" style='left:1043.01px;top:1025.10px;font:700 35.2px/1 "Liberation Sans", sans-serif;color:#fff;'>76.19</span>
<div class="a" style="left:1139.2px;top:1016.6px;width:191.6px;height:47.6px;box-sizing:border-box;border:1px solid #505050;background:linear-gradient(to right,#363636 0,#363636 75.5%,#202020 75.5%,#202020 100%);"></div>
<span class="t" style='left:1238.31px;top:1025.10px;font:700 35.2px/1 "Liberation Sans", sans-serif;color:#fff;'>27.71</span>
<div class="a" style="left:1339.2px;top:1016.6px;width:191.7px;height:47.6px;box-sizing:border-box;border:1px solid #505050;background:linear-gradient(to right,#363636 0,#363636 70.0%,#202020 70.0%,#202020 100%);"></div>
<span class="t" style='left:1438.41px;top:1025.10px;font:700 35.2px/1 "Liberation Sans", sans-serif;color:#fff;'>63.62</span>
<div class="a" style="left:867px;top:1068px;width:664px;height:23.6px;box-sizing:border-box;border:1px solid #505050;background:#202020;"></div>
<div class="a" style="left:1691px;top:971px;width:110px;height:130px;background:#f9f9f9;border-left:1px solid #ececec;border-top:1px solid #ececec;box-sizing:border-box;"></div>
<div class="a" style="left:1692px;top:972px;width:26px;height:129px;background:#f6f6f6;"></div>
<span class="t" style='left:1726.20px;top:979.68px;font:400 11.6px/1 "Liberation Sans", sans-serif;color:#a9a9a9;letter-spacing:-0.268px;'>Вверх</span>
<span class="t" style='left:1726.20px;top:1001.98px;font:400 11.6px/1 "Liberation Sans", sans-serif;color:#a9a9a9;letter-spacing:0.015px;'>Вниз</span>
<span class="t" style='left:1726.20px;top:1031.18px;font:400 11.6px/1 "Liberation Sans", sans-serif;color:#a9a9a9;'>Страница вверх</span>
<span class="t" style='left:1726.20px;top:1052.78px;font:400 11.6px/1 "Liberation Sans", sans-serif;color:#a9a9a9;'>Страница вниз</span>
<span class="t" style='left:1726.20px;top:1081.38px;font:400 11.6px/1 "Liberation Sans", sans-serif;color:#a9a9a9;'>Прокрутка вверх</span>
<div class="a" style="left:1722px;top:1022px;width:79px;height:1px;background:#e6e6e6;"></div>
<div class="a" style="left:1722px;top:1073px;width:79px;height:1px;background:#e6e6e6;"></div>
</body></html>
